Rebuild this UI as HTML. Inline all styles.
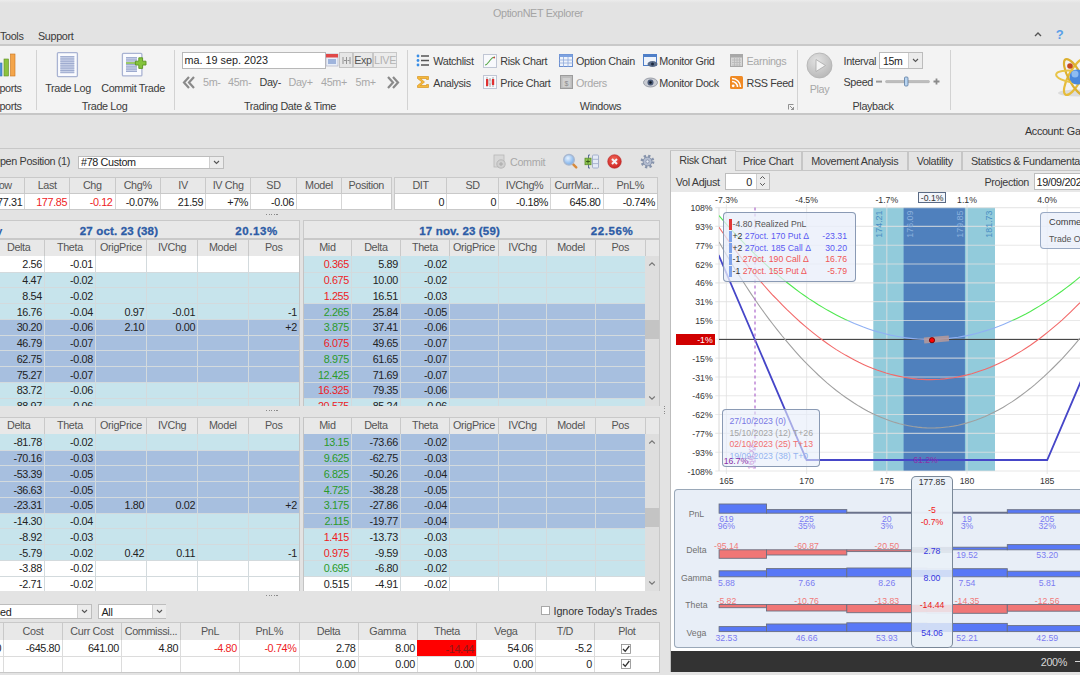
<!DOCTYPE html><html><head><meta charset="utf-8"><style>
html,body{margin:0;padding:0;}
body{width:1080px;height:675px;overflow:hidden;position:relative;background:#e3e3e3;font-family:"Liberation Sans",sans-serif;}
.t{position:absolute;white-space:nowrap;letter-spacing:-0.35px;}
.r{position:absolute;box-sizing:border-box;}
svg{position:absolute;}
</style></head><body>
<div class="r" style="left:0.00px;top:0.00px;width:1080.00px;height:3.00px;background:linear-gradient(#ececec,#e3e3e3);"></div><div class="t" style="top:6.00px;height:14px;line-height:14px;font-size:10.8px;color:#a4a4a4;left:438.00px;width:200px;text-align:center;">OptionNET Explorer</div><div class="t" style="top:29.00px;height:14px;line-height:14px;font-size:10.8px;color:#3a3a3a;left:0.00px;">Tools</div><div class="t" style="top:29.00px;height:14px;line-height:14px;font-size:10.8px;color:#3a3a3a;left:38.00px;">Support</div><div class="r" style="left:0.00px;top:44.00px;width:1080.00px;height:2.00px;background:#c9c9c9;"></div><div class="r" style="left:0.00px;top:46.00px;width:1080.00px;height:67.00px;background:#f3f3f3;"></div><div class="r" style="left:0.00px;top:113.00px;width:1080.00px;height:1.60px;background:#c6c6c6;"></div><div class="t" style="top:124.00px;height:14px;line-height:14px;font-size:10.8px;color:#333;left:1025.00px;">Account: Ga</div><div class="r" style="left:0.00px;top:148.00px;width:1080.00px;height:1.00px;background:#c8c8c8;"></div><div class="r" style="left:36.00px;top:50.00px;width:1.00px;height:60.00px;background:#d2d2d2;"></div><div class="r" style="left:174.00px;top:50.00px;width:1.00px;height:60.00px;background:#d2d2d2;"></div><div class="r" style="left:407.00px;top:50.00px;width:1.00px;height:60.00px;background:#d2d2d2;"></div><div class="r" style="left:797.00px;top:50.00px;width:1.00px;height:60.00px;background:#d2d2d2;"></div><div class="r" style="left:949.50px;top:50.00px;width:1.00px;height:60.00px;background:#d2d2d2;"></div><svg style="left:0;top:53px" width="16" height="24" viewBox="0 0 16 24"><rect x="-3" y="10" width="5" height="13" fill="#4f93d8" stroke="#3a73b0" stroke-width="0.6"/><rect x="4" y="6" width="4.5" height="17" fill="#8cc23f" stroke="#5e8f22" stroke-width="0.6"/><rect x="10.5" y="1" width="4.5" height="22" fill="#f4a54a" stroke="#c8741c" stroke-width="0.6"/></svg><div class="t" style="top:81.00px;height:14px;line-height:14px;font-size:10.8px;color:#3b3b3b;left:-13.70px;">Reports</div><div class="t" style="top:99.00px;height:14px;line-height:14px;font-size:10.8px;color:#3b3b3b;left:-13.70px;">Reports</div><svg style="left:56px;top:51px" width="23" height="27" viewBox="0 0 23 27"><rect x="1.4" y="1.6" width="20" height="24" rx="1" fill="#fafbfe" stroke="#a9b3d2" stroke-width="1.3"/><rect x="4.3" y="5" width="14" height="17" fill="#c6cfe6"/><rect x="4.3" y="5.2" width="14" height="0.9" fill="#9aa7cc"/><rect x="4.3" y="7.5" width="14" height="0.9" fill="#9aa7cc"/><rect x="4.3" y="9.8" width="14" height="0.9" fill="#9aa7cc"/><rect x="4.3" y="12.1" width="14" height="0.9" fill="#9aa7cc"/><rect x="4.3" y="14.4" width="14" height="0.9" fill="#9aa7cc"/><rect x="4.3" y="16.7" width="14" height="0.9" fill="#9aa7cc"/><rect x="4.3" y="19.0" width="14" height="0.9" fill="#9aa7cc"/><rect x="4.3" y="21.3" width="14" height="0.9" fill="#9aa7cc"/></svg><div class="t" style="top:81.00px;height:14px;line-height:14px;font-size:10.8px;color:#3b3b3b;left:28.00px;width:80px;text-align:center;">Trade Log</div><svg style="left:121px;top:52px" width="28" height="25" viewBox="0 0 28 25"><rect x="1.4" y="1.4" width="19.5" height="22.5" rx="1" fill="#fafbfe" stroke="#a9b3d2" stroke-width="1.3"/><rect x="5" y="5" width="11" height="15" fill="#c6cfe6"/><rect x="5" y="5.2" width="11" height="0.9" fill="#9aa7cc"/><rect x="5" y="7.5" width="11" height="0.9" fill="#9aa7cc"/><rect x="5" y="9.8" width="11" height="0.9" fill="#9aa7cc"/><rect x="5" y="12.1" width="11" height="0.9" fill="#9aa7cc"/><rect x="5" y="14.4" width="11" height="0.9" fill="#9aa7cc"/><rect x="5" y="16.7" width="11" height="0.9" fill="#9aa7cc"/><rect x="5" y="19.0" width="11" height="0.9" fill="#9aa7cc"/><rect x="5" y="10" width="10" height="2" fill="#98c868"/><path d="M14.4 9.2h3.4v-3.4h3.8v3.4h3.4v3.8h-3.4v3.4h-3.8v-3.4h-3.4z" fill="#84c43c" stroke="#5c9422" stroke-width="0.9"/></svg><div class="t" style="top:81.00px;height:14px;line-height:14px;font-size:10.8px;color:#3b3b3b;left:93.00px;width:80px;text-align:center;">Commit Trade</div><div class="t" style="top:99.00px;height:14px;line-height:14px;font-size:10.8px;color:#3b3b3b;left:64.50px;width:80px;text-align:center;">Trade Log</div><div class="r" style="left:182.00px;top:51.50px;width:144.00px;height:17.00px;background:#ffffff;box-shadow:inset 0 0 0 1px #b8b8b8;"></div><div class="t" style="top:53.00px;height:14px;line-height:14px;font-size:10.8px;color:#222;left:184.50px;letter-spacing:0;">ma. 19 sep. 2023</div><svg style="left:325px;top:53px" width="14" height="14" viewBox="0 0 14 14"><rect x="1" y="1" width="12" height="12" fill="#e8eef8" stroke="#b8b8c8" stroke-width="0.8"/><rect x="1" y="1" width="12" height="3.5" fill="#e04848"/><rect x="3" y="6" width="8" height="5" fill="#9fb4dc"/></svg><div class="r" style="left:339.00px;top:52.00px;width:14.00px;height:16.00px;background:#e6e6e6;box-shadow:inset 0 0 0 1px #c4c4c4;"></div><svg style="left:342px;top:56px" width="9" height="9" viewBox="0 0 9 9"><path d="M1 1v7M4.5 1v7M8 1v7M2 4.5h2M5.5 4.5h2" stroke="#888" stroke-width="0.9" fill="none"/></svg><div class="r" style="left:353.00px;top:52.00px;width:20.00px;height:16.00px;background:#e9e9e9;box-shadow:inset 0 0 0 1px #c8c8c8;"></div><div class="t" style="top:53.00px;height:14px;line-height:14px;font-size:10.8px;color:#555;left:353.00px;width:20px;text-align:center;">Exp</div><div class="r" style="left:373.00px;top:52.00px;width:24.00px;height:16.00px;background:#ececec;box-shadow:inset 0 0 0 1px #c8c8c8;"></div><div class="t" style="top:53.00px;height:14px;line-height:14px;font-size:10.8px;color:#b2b2b2;left:373.00px;width:24px;text-align:center;">LIVE</div><svg style="left:182px;top:76px" width="14" height="13" viewBox="0 0 14 13"><path d="M7 1L2 6.5 7 12M12 1L7 6.5 12 12" stroke="#8a8a8a" stroke-width="2.2" fill="none"/></svg><div class="t" style="top:75.00px;height:14px;line-height:14px;font-size:10.8px;color:#a8a8a8;left:203.00px;">5m-</div><div class="t" style="top:75.00px;height:14px;line-height:14px;font-size:10.8px;color:#a8a8a8;left:228.00px;">45m-</div><div class="t" style="top:75.00px;height:14px;line-height:14px;font-size:10.8px;color:#3b3b3b;left:259.50px;">Day-</div><div class="t" style="top:75.00px;height:14px;line-height:14px;font-size:10.8px;color:#a8a8a8;left:288.50px;">Day+</div><div class="t" style="top:75.00px;height:14px;line-height:14px;font-size:10.8px;color:#a8a8a8;left:321.00px;">45m+</div><div class="t" style="top:75.00px;height:14px;line-height:14px;font-size:10.8px;color:#a8a8a8;left:355.50px;">5m+</div><svg style="left:386px;top:76px" width="14" height="13" viewBox="0 0 14 13"><path d="M2 1L7 6.5 2 12M7 1L12 6.5 7 12" stroke="#8a8a8a" stroke-width="2.2" fill="none"/></svg><div class="t" style="top:99.00px;height:14px;line-height:14px;font-size:10.8px;color:#3b3b3b;left:230.00px;width:120px;text-align:center;">Trading Date &amp; Time</div><svg style="left:416px;top:54px" width="14" height="13" viewBox="0 0 14 13"><circle cx="2" cy="2" r="1.4" fill="#3a8ee6"/><circle cx="2" cy="6.5" r="1.4" fill="#3a8ee6"/><circle cx="2" cy="11" r="1.4" fill="#3a8ee6"/><path d="M5 2h8M5 6.5h8M5 11h8" stroke="#555" stroke-width="1.6"/></svg><div class="t" style="top:54.00px;height:14px;line-height:14px;font-size:10.8px;color:#3b3b3b;left:433.30px;">Watchlist</div><svg style="left:416px;top:75px" width="14" height="14" viewBox="0 0 14 14"><path d="M1.5 1.5h11v3h-2v-1h-6l4 3.5-4 3.5h6v-1h2v3h-11v-2l4.5-3.5-4.5-3.5z" fill="#f6b93b" stroke="#d08a10" stroke-width="0.6"/></svg><div class="t" style="top:75.70px;height:14px;line-height:14px;font-size:10.8px;color:#3b3b3b;left:433.30px;">Analysis</div><svg style="left:483px;top:54px" width="14" height="14" viewBox="0 0 14 14"><rect x="0.5" y="0.5" width="13" height="13" fill="#f8f9fc" stroke="#c0c6d4" stroke-width="1"/><path d="M2 11C4 11 5 9 6.5 7S9 3 12 3" stroke="#58a848" stroke-width="1.1" fill="none"/><circle cx="11.2" cy="3.6" r="0.9" fill="#d04040"/></svg><div class="t" style="top:54.00px;height:14px;line-height:14px;font-size:10.8px;color:#3b3b3b;left:500.30px;">Risk Chart</div><svg style="left:483px;top:75px" width="14" height="14" viewBox="0 0 14 14"><rect x="0.5" y="0.5" width="13" height="13" fill="#f8f9fc" stroke="#c0c6d4" stroke-width="1"/><path d="M4 2v10M7 3v9M10 2v10" stroke="#909090" stroke-width="0.8"/><rect x="3" y="4" width="2.2" height="7" fill="#e03030"/><rect x="6" y="5" width="2" height="4" fill="#f4f4f4" stroke="#888" stroke-width="0.5"/><rect x="9" y="4" width="2.2" height="6" fill="#e03030"/></svg><div class="t" style="top:75.70px;height:14px;line-height:14px;font-size:10.8px;color:#3b3b3b;left:500.30px;">Price Chart</div><svg style="left:559px;top:54px" width="14" height="13" viewBox="0 0 14 13"><rect x="0.5" y="0.5" width="13" height="12" fill="#eef3fb" stroke="#6b8fd0" stroke-width="1"/><rect x="0.5" y="0.5" width="13" height="2.5" fill="#7da2e0"/><path d="M4.5 3v10M9 3v10M0 6h14M0 9h14" stroke="#8fa9dc" stroke-width="0.8"/></svg><div class="t" style="top:54.00px;height:14px;line-height:14px;font-size:10.8px;color:#3b3b3b;left:576.00px;">Option Chain</div><svg style="left:560px;top:75px" width="13" height="14" viewBox="0 0 13 14"><rect x="0.5" y="0.5" width="12" height="13" fill="#bdbdbd" stroke="#9c9c9c" stroke-width="1"/><rect x="2.5" y="3" width="8" height="9" fill="#d0d0d0"/><text x="6.5" y="11" font-size="7" text-anchor="middle" fill="#8a8a8a" font-family="Liberation Sans">$</text></svg><div class="t" style="top:75.70px;height:14px;line-height:14px;font-size:10.8px;color:#a8a8a8;left:576.00px;">Orders</div><svg style="left:643px;top:54px" width="15" height="14" viewBox="0 0 15 14"><rect x="0.5" y="0.5" width="13" height="11" fill="#eef3fb" stroke="#4f7fc8" stroke-width="1"/><rect x="0.5" y="0.5" width="13" height="2.5" fill="#4f7fc8"/><ellipse cx="9.5" cy="10" rx="5" ry="3" fill="#5a6d8a"/><circle cx="9.5" cy="10" r="1.5" fill="#1d2a40"/></svg><div class="t" style="top:54.00px;height:14px;line-height:14px;font-size:10.8px;color:#3b3b3b;left:659.30px;">Monitor Grid</div><svg style="left:643px;top:77px" width="15" height="11" viewBox="0 0 15 11"><ellipse cx="7.5" cy="5.5" rx="7" ry="4.5" fill="#c8cbd2" stroke="#8a8f9a" stroke-width="0.8"/><circle cx="7.5" cy="5.5" r="3" fill="#4a5a78"/><circle cx="7.5" cy="5.5" r="1.2" fill="#101820"/></svg><div class="t" style="top:75.70px;height:14px;line-height:14px;font-size:10.8px;color:#3b3b3b;left:659.30px;">Monitor Dock</div><svg style="left:730px;top:54px" width="13" height="13" viewBox="0 0 13 13"><rect x="0.5" y="0.5" width="12" height="12" fill="#d6d6d6" stroke="#a8a8a8" stroke-width="1"/><rect x="0.5" y="0.5" width="12" height="3" fill="#a8a8a8"/><path d="M2 6h9M2 8.5h9M2 11h9M4.5 4v8M7 4v8M9.5 4v8" stroke="#b8b8b8" stroke-width="0.8"/></svg><div class="t" style="top:54.00px;height:14px;line-height:14px;font-size:10.8px;color:#a8a8a8;left:746.50px;">Earnings</div><svg style="left:730px;top:76px" width="13" height="13" viewBox="0 0 13 13"><rect x="0" y="0" width="13" height="13" rx="1.5" fill="#f08a24"/><circle cx="3.2" cy="9.8" r="1.4" fill="#fff"/><path d="M2 5.5a5.5 5.5 0 0 1 5.5 5.5M2 2.5a8.5 8.5 0 0 1 8.5 8.5" stroke="#fff" stroke-width="1.5" fill="none"/></svg><div class="t" style="top:75.70px;height:14px;line-height:14px;font-size:10.8px;color:#3b3b3b;left:746.50px;">RSS Feed</div><div class="t" style="top:99.30px;height:14px;line-height:14px;font-size:10.8px;color:#3b3b3b;left:560.50px;width:80px;text-align:center;">Windows</div><svg style="left:788px;top:104px" width="6" height="6" viewBox="0 0 6 6"><path d="M0.5 5.5V0.5h5M2 2l3.5 3.5M5.5 3v2.5H3" stroke="#777" stroke-width="0.8" fill="none"/></svg><svg style="left:806px;top:52px" width="27" height="27" viewBox="0 0 27 27"><defs><radialGradient id="pg" cx="0.4" cy="0.3" r="0.8"><stop offset="0" stop-color="#e2e2e2"/><stop offset="1" stop-color="#b4b4b4"/></radialGradient></defs><circle cx="13.5" cy="13.5" r="12.5" fill="url(#pg)" stroke="#b0b0b0" stroke-width="0.8"/><path d="M10 7.5v12l9.5-6z" fill="#f4f4f4" stroke="#a8a8a8" stroke-width="0.8"/></svg><div class="t" style="top:81.50px;height:14px;line-height:14px;font-size:10.8px;color:#a8a8a8;left:799.50px;width:40px;text-align:center;">Play</div><div class="t" style="top:53.50px;height:14px;line-height:14px;font-size:10.8px;color:#3b3b3b;left:843.50px;">Interval</div><div class="r" style="left:879.00px;top:52.00px;width:44.00px;height:17.00px;background:#ffffff;box-shadow:inset 0 0 0 1px #bcbcbc;"></div><div class="t" style="top:53.50px;height:14px;line-height:14px;font-size:10.5px;color:#222;left:883.00px;">15m</div><div class="r" style="left:908.00px;top:53.00px;width:14.00px;height:15.00px;background:#ececec;"></div><div class="r" style="left:908.00px;top:53.00px;width:1.00px;height:15.00px;background:#cfcfcf;"></div><svg style="left:912px;top:58px" width="7" height="5" viewBox="0 0 7 5"><path d="M1 1l2.5 2.5L6 1" stroke="#555" stroke-width="1.1" fill="none"/></svg><div class="t" style="top:74.50px;height:14px;line-height:14px;font-size:10.8px;color:#3b3b3b;left:843.50px;">Speed</div><svg style="left:874px;top:76px" width="68" height="11" viewBox="0 0 68 11"><rect x="2" y="4.6" width="6" height="2" fill="#9a9a9a"/><rect x="11.5" y="4.5" width="44" height="2.2" rx="1" fill="#bdbdbd" stroke="#9a9a9a" stroke-width="0.4"/><rect x="30.5" y="1" width="3.5" height="9" rx="1" fill="#b8d4f0" stroke="#5a7aa0" stroke-width="0.8"/><path d="M62.5 2.5v6M59.5 5.5h6" stroke="#8a8a8a" stroke-width="1.8"/></svg><div class="t" style="top:99.30px;height:14px;line-height:14px;font-size:10.8px;color:#3b3b3b;left:833.00px;width:80px;text-align:center;">Playback</div><svg style="left:1040px;top:50px" width="40" height="52" viewBox="1040 50 40 52"><ellipse cx="1078" cy="93" rx="20" ry="3.5" fill="#d6d6d6" opacity="0.8"/><ellipse cx="1075" cy="77" rx="20" ry="6.5" transform="rotate(-62 1075 77)" fill="none" stroke="#e6bc3a" stroke-width="2.2"/><ellipse cx="1075" cy="77" rx="20" ry="6.5" transform="rotate(62 1075 77)" fill="none" stroke="#dcb030" stroke-width="2.2"/><ellipse cx="1075" cy="77" rx="19" ry="6" transform="rotate(8 1075 77)" fill="none" stroke="#e8c448" stroke-width="2"/><circle cx="1077" cy="77" r="7.5" fill="#4a88dc"/><circle cx="1075" cy="74" r="3.5" fill="#a6cdf8" opacity="0.75"/><circle cx="1070" cy="66" r="2.8" fill="#c4461e"/></svg><svg style="left:1034px;top:31px" width="8" height="6" viewBox="0 0 8 6"><path d="M1 5L4 2l3 3" stroke="#555" stroke-width="1.4" fill="none"/></svg><div class="t" style="top:28.00px;height:14px;line-height:14px;font-size:13px;color:#5aa0e8;font-weight:bold;left:1052.50px;width:14px;text-align:center;">?</div><div class="t" style="top:154.40px;height:14px;line-height:14px;font-size:10.8px;color:#3a3a3a;right:1010.00px;">Open Position (1)</div><div class="r" style="left:78.00px;top:155.50px;width:146.00px;height:13.50px;background:#ffffff;box-shadow:inset 0 0 0 1px #bdbdbd;"></div><div class="t" style="top:155.00px;height:14px;line-height:14px;font-size:10.8px;color:#222;left:81.00px;">#78 Custom</div><div class="r" style="left:209.00px;top:156.50px;width:14.00px;height:11.50px;background:#ececec;"></div><div class="r" style="left:209.00px;top:156.50px;width:1.00px;height:11.50px;background:#cfcfcf;"></div><svg style="left:213px;top:160px" width="7" height="5" viewBox="0 0 7 5"><path d="M1 1l2.5 2.5L6 1" stroke="#555" stroke-width="1.1" fill="none"/></svg><svg style="left:493px;top:154px" width="14" height="15" viewBox="0 0 14 15"><rect x="1" y="1" width="10" height="12" fill="#d8d8d8" stroke="#b8b8b8" stroke-width="0.8"/><circle cx="8" cy="10" r="4.2" fill="#d0d0d0" stroke="#b0b0b0" stroke-width="0.8"/><path d="M8 8v4M6 10h4" stroke="#aaa" stroke-width="1"/></svg><div class="t" style="top:154.50px;height:14px;line-height:14px;font-size:10.8px;color:#a8a8a8;left:510.00px;">Commit</div><svg style="left:562px;top:153px" width="16" height="16" viewBox="0 0 16 16"><defs><radialGradient id="mg" cx="0.4" cy="0.35" r="0.7"><stop offset="0" stop-color="#e6f2ff"/><stop offset="1" stop-color="#6fa8e8"/></radialGradient></defs><path d="M10 10.2l4.2 4.2" stroke="#d88a3a" stroke-width="2.4" stroke-linecap="round"/><circle cx="7" cy="6.8" r="5.3" fill="url(#mg)" stroke="#a9b8d0" stroke-width="1.4"/></svg><svg style="left:584px;top:154px" width="16" height="15" viewBox="0 0 16 15"><path d="M6 1H4.5v13H6" stroke="#5a6c98" stroke-width="1" fill="none"/><rect x="8.5" y="1" width="6" height="13" rx="1" fill="#e4eaf6" stroke="#a4b0cc" stroke-width="1"/><path d="M9 5.3h5M9 9.6h5" stroke="#a4b0cc" stroke-width="0.9"/><rect x="1" y="4.2" width="6" height="6.5" fill="#8cc450" stroke="#5a8e2a" stroke-width="0.8"/><path d="M4 5.5v4M2 7.5h4" stroke="#2d4a10" stroke-width="0.8"/></svg><svg style="left:607px;top:154px" width="15" height="15" viewBox="0 0 15 15"><defs><radialGradient id="rx" cx="0.45" cy="0.35" r="0.7"><stop offset="0" stop-color="#f46a5a"/><stop offset="1" stop-color="#c81e1e"/></radialGradient></defs><circle cx="7.5" cy="7.5" r="6.8" fill="url(#rx)" stroke="#b82a2a" stroke-width="0.6"/><path d="M5 5l5 5M10 5l-5 5" stroke="#f2f4f8" stroke-width="2"/></svg><svg style="left:640px;top:154px" width="15" height="15" viewBox="0 0 15 15"><circle cx="7.5" cy="7.5" r="5.6" fill="none" stroke="#8693ab" stroke-width="2.6" stroke-dasharray="2.2 2.2"/><circle cx="7.5" cy="7.5" r="4.4" fill="#b4bdd0" stroke="#7d8aa4" stroke-width="0.9"/><circle cx="7.5" cy="7.5" r="1.6" fill="#e8ecf4" stroke="#7d8aa4" stroke-width="0.7"/></svg><div class="r" style="left:-20.00px;top:176.60px;width:44.80px;height:17.00px;background:#e8e8e8;"></div><div class="r" style="left:24.80px;top:176.60px;width:44.80px;height:17.00px;background:#e8e8e8;"></div><div class="r" style="left:69.60px;top:176.60px;width:45.40px;height:17.00px;background:#e8e8e8;"></div><div class="r" style="left:115.00px;top:176.60px;width:45.40px;height:17.00px;background:#e8e8e8;"></div><div class="r" style="left:160.40px;top:176.60px;width:45.20px;height:17.00px;background:#e8e8e8;"></div><div class="r" style="left:205.60px;top:176.60px;width:45.00px;height:17.00px;background:#e8e8e8;"></div><div class="r" style="left:250.60px;top:176.60px;width:45.80px;height:17.00px;background:#e8e8e8;"></div><div class="r" style="left:296.40px;top:176.60px;width:45.00px;height:17.00px;background:#e8e8e8;"></div><div class="r" style="left:341.40px;top:176.60px;width:49.60px;height:17.00px;background:#e8e8e8;"></div><div class="t" style="top:178.10px;height:14px;line-height:14px;font-size:10.8px;color:#555555;left:-57.60px;width:120px;text-align:center;">Low</div><div class="t" style="top:178.10px;height:14px;line-height:14px;font-size:10.8px;color:#555555;left:-12.80px;width:120px;text-align:center;">Last</div><div class="t" style="top:178.10px;height:14px;line-height:14px;font-size:10.8px;color:#555555;left:32.30px;width:120px;text-align:center;">Chg</div><div class="t" style="top:178.10px;height:14px;line-height:14px;font-size:10.8px;color:#555555;left:77.70px;width:120px;text-align:center;">Chg%</div><div class="t" style="top:178.10px;height:14px;line-height:14px;font-size:10.8px;color:#555555;left:123.00px;width:120px;text-align:center;">IV</div><div class="t" style="top:178.10px;height:14px;line-height:14px;font-size:10.8px;color:#555555;left:168.10px;width:120px;text-align:center;">IV Chg</div><div class="t" style="top:178.10px;height:14px;line-height:14px;font-size:10.8px;color:#555555;left:213.50px;width:120px;text-align:center;">SD</div><div class="t" style="top:178.10px;height:14px;line-height:14px;font-size:10.8px;color:#555555;left:258.90px;width:120px;text-align:center;">Model</div><div class="t" style="top:178.10px;height:14px;line-height:14px;font-size:10.8px;color:#555555;left:306.20px;width:120px;text-align:center;">Position</div><div class="r" style="left:-20.00px;top:193.60px;width:44.80px;height:15.80px;background:#ffffff;"></div><div class="r" style="left:24.80px;top:193.60px;width:44.80px;height:15.80px;background:#ffffff;"></div><div class="r" style="left:69.60px;top:193.60px;width:45.40px;height:15.80px;background:#ffffff;"></div><div class="r" style="left:115.00px;top:193.60px;width:45.40px;height:15.80px;background:#ffffff;"></div><div class="r" style="left:160.40px;top:193.60px;width:45.20px;height:15.80px;background:#ffffff;"></div><div class="r" style="left:205.60px;top:193.60px;width:45.00px;height:15.80px;background:#ffffff;"></div><div class="r" style="left:250.60px;top:193.60px;width:45.80px;height:15.80px;background:#ffffff;"></div><div class="r" style="left:296.40px;top:193.60px;width:45.00px;height:15.80px;background:#ffffff;"></div><div class="r" style="left:341.40px;top:193.60px;width:49.60px;height:15.80px;background:#ffffff;"></div><div class="t" style="top:194.50px;height:14px;line-height:14px;font-size:10.8px;color:#222222;right:1057.70px;">177.31</div><div class="t" style="top:194.50px;height:14px;line-height:14px;font-size:10.8px;color:#ee1c24;right:1012.90px;">177.85</div><div class="t" style="top:194.50px;height:14px;line-height:14px;font-size:10.8px;color:#ee1c24;right:967.50px;">-0.12</div><div class="t" style="top:194.50px;height:14px;line-height:14px;font-size:10.8px;color:#222222;right:922.10px;">-0.07%</div><div class="t" style="top:194.50px;height:14px;line-height:14px;font-size:10.8px;color:#222222;right:876.90px;">21.59</div><div class="t" style="top:194.50px;height:14px;line-height:14px;font-size:10.8px;color:#222222;right:831.90px;">+7%</div><div class="t" style="top:194.50px;height:14px;line-height:14px;font-size:10.8px;color:#222222;right:786.10px;">-0.06</div><div class="r" style="left:24.30px;top:176.60px;width:1.00px;height:17.00px;background:#c9c9c9;"></div><div class="r" style="left:69.10px;top:176.60px;width:1.00px;height:17.00px;background:#c9c9c9;"></div><div class="r" style="left:114.50px;top:176.60px;width:1.00px;height:17.00px;background:#c9c9c9;"></div><div class="r" style="left:159.90px;top:176.60px;width:1.00px;height:17.00px;background:#c9c9c9;"></div><div class="r" style="left:205.10px;top:176.60px;width:1.00px;height:17.00px;background:#c9c9c9;"></div><div class="r" style="left:250.10px;top:176.60px;width:1.00px;height:17.00px;background:#c9c9c9;"></div><div class="r" style="left:295.90px;top:176.60px;width:1.00px;height:17.00px;background:#c9c9c9;"></div><div class="r" style="left:340.90px;top:176.60px;width:1.00px;height:17.00px;background:#c9c9c9;"></div><div class="r" style="left:-20.00px;top:176.60px;width:411.00px;height:1.00px;background:#c9c9c9;"></div><div class="r" style="left:-20.00px;top:193.10px;width:411.00px;height:1.00px;background:#c9c9c9;"></div><div class="r" style="left:24.30px;top:193.60px;width:1.00px;height:15.80px;background:#d6d6d6;"></div><div class="r" style="left:69.10px;top:193.60px;width:1.00px;height:15.80px;background:#d6d6d6;"></div><div class="r" style="left:114.50px;top:193.60px;width:1.00px;height:15.80px;background:#d6d6d6;"></div><div class="r" style="left:159.90px;top:193.60px;width:1.00px;height:15.80px;background:#d6d6d6;"></div><div class="r" style="left:205.10px;top:193.60px;width:1.00px;height:15.80px;background:#d6d6d6;"></div><div class="r" style="left:250.10px;top:193.60px;width:1.00px;height:15.80px;background:#d6d6d6;"></div><div class="r" style="left:295.90px;top:193.60px;width:1.00px;height:15.80px;background:#d6d6d6;"></div><div class="r" style="left:340.90px;top:193.60px;width:1.00px;height:15.80px;background:#d6d6d6;"></div><div class="r" style="left:-20.00px;top:208.90px;width:411.00px;height:1.00px;background:#c9c9c9;"></div><div class="r" style="left:390.50px;top:176.60px;width:1.00px;height:33.30px;background:#c9c9c9;"></div><div class="r" style="left:394.60px;top:176.60px;width:52.00px;height:17.00px;background:#e8e8e8;"></div><div class="r" style="left:446.60px;top:176.60px;width:52.00px;height:17.00px;background:#e8e8e8;"></div><div class="r" style="left:498.60px;top:176.60px;width:52.00px;height:17.00px;background:#e8e8e8;"></div><div class="r" style="left:550.60px;top:176.60px;width:52.40px;height:17.00px;background:#e8e8e8;"></div><div class="r" style="left:603.00px;top:176.60px;width:54.40px;height:17.00px;background:#e8e8e8;"></div><div class="t" style="top:178.10px;height:14px;line-height:14px;font-size:10.8px;color:#555555;left:360.60px;width:120px;text-align:center;">DIT</div><div class="t" style="top:178.10px;height:14px;line-height:14px;font-size:10.8px;color:#555555;left:412.60px;width:120px;text-align:center;">SD</div><div class="t" style="top:178.10px;height:14px;line-height:14px;font-size:10.8px;color:#555555;left:464.60px;width:120px;text-align:center;">IVChg%</div><div class="t" style="top:178.10px;height:14px;line-height:14px;font-size:10.8px;color:#555555;left:516.80px;width:120px;text-align:center;">CurrMar...</div><div class="t" style="top:178.10px;height:14px;line-height:14px;font-size:10.8px;color:#555555;left:570.20px;width:120px;text-align:center;">PnL%</div><div class="r" style="left:394.60px;top:193.60px;width:52.00px;height:15.80px;background:#ffffff;"></div><div class="r" style="left:446.60px;top:193.60px;width:52.00px;height:15.80px;background:#ffffff;"></div><div class="r" style="left:498.60px;top:193.60px;width:52.00px;height:15.80px;background:#ffffff;"></div><div class="r" style="left:550.60px;top:193.60px;width:52.40px;height:15.80px;background:#ffffff;"></div><div class="r" style="left:603.00px;top:193.60px;width:54.40px;height:15.80px;background:#ffffff;"></div><div class="t" style="top:194.50px;height:14px;line-height:14px;font-size:10.8px;color:#222222;right:635.90px;">0</div><div class="t" style="top:194.50px;height:14px;line-height:14px;font-size:10.8px;color:#222222;right:583.90px;">0</div><div class="t" style="top:194.50px;height:14px;line-height:14px;font-size:10.8px;color:#222222;right:531.90px;">-0.18%</div><div class="t" style="top:194.50px;height:14px;line-height:14px;font-size:10.8px;color:#222222;right:479.50px;">645.80</div><div class="t" style="top:194.50px;height:14px;line-height:14px;font-size:10.8px;color:#222222;right:425.10px;">-0.74%</div><div class="r" style="left:446.10px;top:176.60px;width:1.00px;height:17.00px;background:#c9c9c9;"></div><div class="r" style="left:498.10px;top:176.60px;width:1.00px;height:17.00px;background:#c9c9c9;"></div><div class="r" style="left:550.10px;top:176.60px;width:1.00px;height:17.00px;background:#c9c9c9;"></div><div class="r" style="left:602.50px;top:176.60px;width:1.00px;height:17.00px;background:#c9c9c9;"></div><div class="r" style="left:394.60px;top:176.60px;width:262.80px;height:1.00px;background:#c9c9c9;"></div><div class="r" style="left:394.60px;top:193.10px;width:262.80px;height:1.00px;background:#c9c9c9;"></div><div class="r" style="left:446.10px;top:193.60px;width:1.00px;height:15.80px;background:#d6d6d6;"></div><div class="r" style="left:498.10px;top:193.60px;width:1.00px;height:15.80px;background:#d6d6d6;"></div><div class="r" style="left:550.10px;top:193.60px;width:1.00px;height:15.80px;background:#d6d6d6;"></div><div class="r" style="left:602.50px;top:193.60px;width:1.00px;height:15.80px;background:#d6d6d6;"></div><div class="r" style="left:394.60px;top:208.90px;width:262.80px;height:1.00px;background:#c9c9c9;"></div><div class="r" style="left:394.10px;top:176.60px;width:1.00px;height:33.30px;background:#c9c9c9;"></div><div class="r" style="left:656.90px;top:176.60px;width:1.00px;height:33.30px;background:#c9c9c9;"></div><div class="r" style="left:266.00px;top:214.10px;width:1.30px;height:1.20px;background:#8a8a8a;"></div><div class="r" style="left:268.60px;top:214.10px;width:1.30px;height:1.20px;background:#8a8a8a;"></div><div class="r" style="left:271.20px;top:214.10px;width:1.30px;height:1.20px;background:#8a8a8a;"></div><div class="r" style="left:273.80px;top:214.10px;width:1.30px;height:1.20px;background:#8a8a8a;"></div><div class="r" style="left:276.40px;top:214.10px;width:1.30px;height:1.20px;background:#8a8a8a;"></div><div class="r" style="left:-20.00px;top:220.20px;width:319.90px;height:18.40px;background:#e8e8e8;box-shadow:inset 0 0 0 1px #c9c9c9;"></div><div class="r" style="left:303.40px;top:220.20px;width:356.50px;height:18.40px;background:#e8e8e8;box-shadow:inset 0 0 0 1px #c9c9c9;"></div><div class="t" style="top:223.60px;height:14px;line-height:14px;font-size:11.5px;color:#2d5ca6;font-weight:bold;left:59.00px;width:120px;text-align:center;letter-spacing:0.15px;-webkit-text-stroke:0.3px #2d5ca6;">27 oct. 23 (38)</div><div class="t" style="top:223.60px;height:14px;line-height:14px;font-size:11.5px;color:#2d5ca6;font-weight:bold;left:216.50px;width:80px;text-align:center;letter-spacing:0.6px;-webkit-text-stroke:0.3px #2d5ca6;">20.13%</div><div class="t" style="top:223.60px;height:14px;line-height:14px;font-size:11.5px;color:#2d5ca6;font-weight:bold;right:1078.00px;">y</div><div class="t" style="top:223.60px;height:14px;line-height:14px;font-size:11.5px;color:#2d5ca6;font-weight:bold;left:399.60px;width:120px;text-align:center;letter-spacing:0.15px;-webkit-text-stroke:0.3px #2d5ca6;">17 nov. 23 (59)</div><div class="t" style="top:223.60px;height:14px;line-height:14px;font-size:11.5px;color:#2d5ca6;font-weight:bold;left:572.00px;width:80px;text-align:center;letter-spacing:0.6px;-webkit-text-stroke:0.3px #2d5ca6;">22.56%</div><div class="r" style="left:-7.00px;top:238.60px;width:51.40px;height:17.80px;background:#e8e8e8;"></div><div class="r" style="left:44.40px;top:238.60px;width:51.00px;height:17.80px;background:#e8e8e8;"></div><div class="r" style="left:95.40px;top:238.60px;width:51.20px;height:17.80px;background:#e8e8e8;"></div><div class="r" style="left:146.60px;top:238.60px;width:51.00px;height:17.80px;background:#e8e8e8;"></div><div class="r" style="left:197.60px;top:238.60px;width:50.40px;height:17.80px;background:#e8e8e8;"></div><div class="r" style="left:248.00px;top:238.60px;width:51.40px;height:17.80px;background:#e8e8e8;"></div><div class="t" style="top:239.60px;height:14px;line-height:14px;font-size:10.8px;color:#555555;left:-41.30px;width:120px;text-align:center;">Delta</div><div class="t" style="top:239.60px;height:14px;line-height:14px;font-size:10.8px;color:#555555;left:9.90px;width:120px;text-align:center;">Theta</div><div class="t" style="top:239.60px;height:14px;line-height:14px;font-size:10.8px;color:#555555;left:61.00px;width:120px;text-align:center;">OrigPrice</div><div class="t" style="top:239.60px;height:14px;line-height:14px;font-size:10.8px;color:#555555;left:112.10px;width:120px;text-align:center;">IVChg</div><div class="t" style="top:239.60px;height:14px;line-height:14px;font-size:10.8px;color:#555555;left:162.80px;width:120px;text-align:center;">Model</div><div class="t" style="top:239.60px;height:14px;line-height:14px;font-size:10.8px;color:#555555;left:213.70px;width:120px;text-align:center;">Pos</div><div class="r" style="left:43.90px;top:238.60px;width:1.00px;height:17.80px;background:#c9c9c9;"></div><div class="r" style="left:94.90px;top:238.60px;width:1.00px;height:17.80px;background:#c9c9c9;"></div><div class="r" style="left:146.10px;top:238.60px;width:1.00px;height:17.80px;background:#c9c9c9;"></div><div class="r" style="left:197.10px;top:238.60px;width:1.00px;height:17.80px;background:#c9c9c9;"></div><div class="r" style="left:247.50px;top:238.60px;width:1.00px;height:17.80px;background:#c9c9c9;"></div><div class="r" style="left:-7.00px;top:255.90px;width:306.40px;height:1.00px;background:#c9c9c9;"></div><div class="r" style="left:303.40px;top:238.60px;width:48.00px;height:17.80px;background:#e8e8e8;"></div><div class="r" style="left:351.40px;top:238.60px;width:49.00px;height:17.80px;background:#e8e8e8;"></div><div class="r" style="left:400.40px;top:238.60px;width:49.00px;height:17.80px;background:#e8e8e8;"></div><div class="r" style="left:449.40px;top:238.60px;width:49.00px;height:17.80px;background:#e8e8e8;"></div><div class="r" style="left:498.40px;top:238.60px;width:48.20px;height:17.80px;background:#e8e8e8;"></div><div class="r" style="left:546.60px;top:238.60px;width:48.90px;height:17.80px;background:#e8e8e8;"></div><div class="r" style="left:595.50px;top:238.60px;width:49.50px;height:17.80px;background:#e8e8e8;"></div><div class="r" style="left:645.00px;top:238.60px;width:14.40px;height:17.80px;background:#e8e8e8;"></div><div class="t" style="top:239.60px;height:14px;line-height:14px;font-size:10.8px;color:#555555;left:267.40px;width:120px;text-align:center;">Mid</div><div class="t" style="top:239.60px;height:14px;line-height:14px;font-size:10.8px;color:#555555;left:315.90px;width:120px;text-align:center;">Delta</div><div class="t" style="top:239.60px;height:14px;line-height:14px;font-size:10.8px;color:#555555;left:364.90px;width:120px;text-align:center;">Theta</div><div class="t" style="top:239.60px;height:14px;line-height:14px;font-size:10.8px;color:#555555;left:413.90px;width:120px;text-align:center;">OrigPrice</div><div class="t" style="top:239.60px;height:14px;line-height:14px;font-size:10.8px;color:#555555;left:462.50px;width:120px;text-align:center;">IVChg</div><div class="t" style="top:239.60px;height:14px;line-height:14px;font-size:10.8px;color:#555555;left:511.05px;width:120px;text-align:center;">Model</div><div class="t" style="top:239.60px;height:14px;line-height:14px;font-size:10.8px;color:#555555;left:560.25px;width:120px;text-align:center;">Pos</div><div class="r" style="left:350.90px;top:238.60px;width:1.00px;height:17.80px;background:#c9c9c9;"></div><div class="r" style="left:399.90px;top:238.60px;width:1.00px;height:17.80px;background:#c9c9c9;"></div><div class="r" style="left:448.90px;top:238.60px;width:1.00px;height:17.80px;background:#c9c9c9;"></div><div class="r" style="left:497.90px;top:238.60px;width:1.00px;height:17.80px;background:#c9c9c9;"></div><div class="r" style="left:546.10px;top:238.60px;width:1.00px;height:17.80px;background:#c9c9c9;"></div><div class="r" style="left:595.00px;top:238.60px;width:1.00px;height:17.80px;background:#c9c9c9;"></div><div class="r" style="left:644.50px;top:238.60px;width:1.00px;height:17.80px;background:#c9c9c9;"></div><div class="r" style="left:303.40px;top:255.90px;width:356.00px;height:1.00px;background:#c9c9c9;"></div><div class="r" style="left:-20.00px;top:238.60px;width:319.90px;height:1.00px;background:#c9c9c9;"></div><div class="r" style="left:303.40px;top:238.60px;width:356.50px;height:1.00px;background:#c9c9c9;"></div><div class="r" style="left:-7.00px;top:256.40px;width:51.40px;height:15.75px;background:#ffffff;"></div><div class="r" style="left:44.40px;top:256.40px;width:51.00px;height:15.75px;background:#ffffff;"></div><div class="r" style="left:95.40px;top:256.40px;width:51.20px;height:15.75px;background:#ffffff;"></div><div class="r" style="left:146.60px;top:256.40px;width:51.00px;height:15.75px;background:#ffffff;"></div><div class="r" style="left:197.60px;top:256.40px;width:50.40px;height:15.75px;background:#ffffff;"></div><div class="r" style="left:248.00px;top:256.40px;width:51.40px;height:15.75px;background:#ffffff;"></div><div class="r" style="left:-7.00px;top:272.15px;width:51.40px;height:15.75px;background:#c7e4ec;"></div><div class="r" style="left:44.40px;top:272.15px;width:51.00px;height:15.75px;background:#c7e4ec;"></div><div class="r" style="left:95.40px;top:272.15px;width:51.20px;height:15.75px;background:#c7e4ec;"></div><div class="r" style="left:146.60px;top:272.15px;width:51.00px;height:15.75px;background:#c7e4ec;"></div><div class="r" style="left:197.60px;top:272.15px;width:50.40px;height:15.75px;background:#c7e4ec;"></div><div class="r" style="left:248.00px;top:272.15px;width:51.40px;height:15.75px;background:#c7e4ec;"></div><div class="r" style="left:-7.00px;top:287.90px;width:51.40px;height:15.75px;background:#c7e4ec;"></div><div class="r" style="left:44.40px;top:287.90px;width:51.00px;height:15.75px;background:#c7e4ec;"></div><div class="r" style="left:95.40px;top:287.90px;width:51.20px;height:15.75px;background:#c7e4ec;"></div><div class="r" style="left:146.60px;top:287.90px;width:51.00px;height:15.75px;background:#c7e4ec;"></div><div class="r" style="left:197.60px;top:287.90px;width:50.40px;height:15.75px;background:#c7e4ec;"></div><div class="r" style="left:248.00px;top:287.90px;width:51.40px;height:15.75px;background:#c7e4ec;"></div><div class="r" style="left:-7.00px;top:303.65px;width:51.40px;height:15.75px;background:#c7e4ec;"></div><div class="r" style="left:44.40px;top:303.65px;width:51.00px;height:15.75px;background:#c7e4ec;"></div><div class="r" style="left:95.40px;top:303.65px;width:51.20px;height:15.75px;background:#c7e4ec;"></div><div class="r" style="left:146.60px;top:303.65px;width:51.00px;height:15.75px;background:#c7e4ec;"></div><div class="r" style="left:197.60px;top:303.65px;width:50.40px;height:15.75px;background:#c7e4ec;"></div><div class="r" style="left:248.00px;top:303.65px;width:51.40px;height:15.75px;background:#c7e4ec;"></div><div class="r" style="left:-7.00px;top:319.40px;width:51.40px;height:15.75px;background:#a7bfdf;"></div><div class="r" style="left:44.40px;top:319.40px;width:51.00px;height:15.75px;background:#a7bfdf;"></div><div class="r" style="left:95.40px;top:319.40px;width:51.20px;height:15.75px;background:#a7bfdf;"></div><div class="r" style="left:146.60px;top:319.40px;width:51.00px;height:15.75px;background:#a7bfdf;"></div><div class="r" style="left:197.60px;top:319.40px;width:50.40px;height:15.75px;background:#a7bfdf;"></div><div class="r" style="left:248.00px;top:319.40px;width:51.40px;height:15.75px;background:#a7bfdf;"></div><div class="r" style="left:-7.00px;top:335.15px;width:51.40px;height:15.75px;background:#a7bfdf;"></div><div class="r" style="left:44.40px;top:335.15px;width:51.00px;height:15.75px;background:#a7bfdf;"></div><div class="r" style="left:95.40px;top:335.15px;width:51.20px;height:15.75px;background:#a7bfdf;"></div><div class="r" style="left:146.60px;top:335.15px;width:51.00px;height:15.75px;background:#a7bfdf;"></div><div class="r" style="left:197.60px;top:335.15px;width:50.40px;height:15.75px;background:#a7bfdf;"></div><div class="r" style="left:248.00px;top:335.15px;width:51.40px;height:15.75px;background:#a7bfdf;"></div><div class="r" style="left:-7.00px;top:350.90px;width:51.40px;height:15.75px;background:#a7bfdf;"></div><div class="r" style="left:44.40px;top:350.90px;width:51.00px;height:15.75px;background:#a7bfdf;"></div><div class="r" style="left:95.40px;top:350.90px;width:51.20px;height:15.75px;background:#a7bfdf;"></div><div class="r" style="left:146.60px;top:350.90px;width:51.00px;height:15.75px;background:#a7bfdf;"></div><div class="r" style="left:197.60px;top:350.90px;width:50.40px;height:15.75px;background:#a7bfdf;"></div><div class="r" style="left:248.00px;top:350.90px;width:51.40px;height:15.75px;background:#a7bfdf;"></div><div class="r" style="left:-7.00px;top:366.65px;width:51.40px;height:15.75px;background:#a7bfdf;"></div><div class="r" style="left:44.40px;top:366.65px;width:51.00px;height:15.75px;background:#a7bfdf;"></div><div class="r" style="left:95.40px;top:366.65px;width:51.20px;height:15.75px;background:#a7bfdf;"></div><div class="r" style="left:146.60px;top:366.65px;width:51.00px;height:15.75px;background:#a7bfdf;"></div><div class="r" style="left:197.60px;top:366.65px;width:50.40px;height:15.75px;background:#a7bfdf;"></div><div class="r" style="left:248.00px;top:366.65px;width:51.40px;height:15.75px;background:#a7bfdf;"></div><div class="r" style="left:-7.00px;top:382.40px;width:51.40px;height:15.75px;background:#c7e4ec;"></div><div class="r" style="left:44.40px;top:382.40px;width:51.00px;height:15.75px;background:#c7e4ec;"></div><div class="r" style="left:95.40px;top:382.40px;width:51.20px;height:15.75px;background:#c7e4ec;"></div><div class="r" style="left:146.60px;top:382.40px;width:51.00px;height:15.75px;background:#c7e4ec;"></div><div class="r" style="left:197.60px;top:382.40px;width:50.40px;height:15.75px;background:#c7e4ec;"></div><div class="r" style="left:248.00px;top:382.40px;width:51.40px;height:15.75px;background:#c7e4ec;"></div><div class="r" style="left:-7.00px;top:398.15px;width:51.40px;height:7.55px;background:#c7e4ec;"></div><div class="r" style="left:44.40px;top:398.15px;width:51.00px;height:7.55px;background:#c7e4ec;"></div><div class="r" style="left:95.40px;top:398.15px;width:51.20px;height:7.55px;background:#c7e4ec;"></div><div class="r" style="left:146.60px;top:398.15px;width:51.00px;height:7.55px;background:#c7e4ec;"></div><div class="r" style="left:197.60px;top:398.15px;width:50.40px;height:7.55px;background:#c7e4ec;"></div><div class="r" style="left:248.00px;top:398.15px;width:51.40px;height:7.55px;background:#c7e4ec;"></div><div class="r" style="left:303.40px;top:256.40px;width:48.00px;height:15.75px;background:#c7e4ec;"></div><div class="r" style="left:351.40px;top:256.40px;width:49.00px;height:15.75px;background:#c7e4ec;"></div><div class="r" style="left:400.40px;top:256.40px;width:49.00px;height:15.75px;background:#c7e4ec;"></div><div class="r" style="left:449.40px;top:256.40px;width:49.00px;height:15.75px;background:#c7e4ec;"></div><div class="r" style="left:498.40px;top:256.40px;width:48.20px;height:15.75px;background:#c7e4ec;"></div><div class="r" style="left:546.60px;top:256.40px;width:48.90px;height:15.75px;background:#c7e4ec;"></div><div class="r" style="left:595.50px;top:256.40px;width:49.50px;height:15.75px;background:#c7e4ec;"></div><div class="r" style="left:303.40px;top:272.15px;width:48.00px;height:15.75px;background:#c7e4ec;"></div><div class="r" style="left:351.40px;top:272.15px;width:49.00px;height:15.75px;background:#c7e4ec;"></div><div class="r" style="left:400.40px;top:272.15px;width:49.00px;height:15.75px;background:#c7e4ec;"></div><div class="r" style="left:449.40px;top:272.15px;width:49.00px;height:15.75px;background:#c7e4ec;"></div><div class="r" style="left:498.40px;top:272.15px;width:48.20px;height:15.75px;background:#c7e4ec;"></div><div class="r" style="left:546.60px;top:272.15px;width:48.90px;height:15.75px;background:#c7e4ec;"></div><div class="r" style="left:595.50px;top:272.15px;width:49.50px;height:15.75px;background:#c7e4ec;"></div><div class="r" style="left:303.40px;top:287.90px;width:48.00px;height:15.75px;background:#c7e4ec;"></div><div class="r" style="left:351.40px;top:287.90px;width:49.00px;height:15.75px;background:#c7e4ec;"></div><div class="r" style="left:400.40px;top:287.90px;width:49.00px;height:15.75px;background:#c7e4ec;"></div><div class="r" style="left:449.40px;top:287.90px;width:49.00px;height:15.75px;background:#c7e4ec;"></div><div class="r" style="left:498.40px;top:287.90px;width:48.20px;height:15.75px;background:#c7e4ec;"></div><div class="r" style="left:546.60px;top:287.90px;width:48.90px;height:15.75px;background:#c7e4ec;"></div><div class="r" style="left:595.50px;top:287.90px;width:49.50px;height:15.75px;background:#c7e4ec;"></div><div class="r" style="left:303.40px;top:303.65px;width:48.00px;height:15.75px;background:#a7bfdf;"></div><div class="r" style="left:351.40px;top:303.65px;width:49.00px;height:15.75px;background:#a7bfdf;"></div><div class="r" style="left:400.40px;top:303.65px;width:49.00px;height:15.75px;background:#a7bfdf;"></div><div class="r" style="left:449.40px;top:303.65px;width:49.00px;height:15.75px;background:#a7bfdf;"></div><div class="r" style="left:498.40px;top:303.65px;width:48.20px;height:15.75px;background:#a7bfdf;"></div><div class="r" style="left:546.60px;top:303.65px;width:48.90px;height:15.75px;background:#a7bfdf;"></div><div class="r" style="left:595.50px;top:303.65px;width:49.50px;height:15.75px;background:#a7bfdf;"></div><div class="r" style="left:303.40px;top:319.40px;width:48.00px;height:15.75px;background:#a7bfdf;"></div><div class="r" style="left:351.40px;top:319.40px;width:49.00px;height:15.75px;background:#a7bfdf;"></div><div class="r" style="left:400.40px;top:319.40px;width:49.00px;height:15.75px;background:#a7bfdf;"></div><div class="r" style="left:449.40px;top:319.40px;width:49.00px;height:15.75px;background:#a7bfdf;"></div><div class="r" style="left:498.40px;top:319.40px;width:48.20px;height:15.75px;background:#a7bfdf;"></div><div class="r" style="left:546.60px;top:319.40px;width:48.90px;height:15.75px;background:#a7bfdf;"></div><div class="r" style="left:595.50px;top:319.40px;width:49.50px;height:15.75px;background:#a7bfdf;"></div><div class="r" style="left:303.40px;top:335.15px;width:48.00px;height:15.75px;background:#a7bfdf;"></div><div class="r" style="left:351.40px;top:335.15px;width:49.00px;height:15.75px;background:#a7bfdf;"></div><div class="r" style="left:400.40px;top:335.15px;width:49.00px;height:15.75px;background:#a7bfdf;"></div><div class="r" style="left:449.40px;top:335.15px;width:49.00px;height:15.75px;background:#a7bfdf;"></div><div class="r" style="left:498.40px;top:335.15px;width:48.20px;height:15.75px;background:#a7bfdf;"></div><div class="r" style="left:546.60px;top:335.15px;width:48.90px;height:15.75px;background:#a7bfdf;"></div><div class="r" style="left:595.50px;top:335.15px;width:49.50px;height:15.75px;background:#a7bfdf;"></div><div class="r" style="left:303.40px;top:350.90px;width:48.00px;height:15.75px;background:#a7bfdf;"></div><div class="r" style="left:351.40px;top:350.90px;width:49.00px;height:15.75px;background:#a7bfdf;"></div><div class="r" style="left:400.40px;top:350.90px;width:49.00px;height:15.75px;background:#a7bfdf;"></div><div class="r" style="left:449.40px;top:350.90px;width:49.00px;height:15.75px;background:#a7bfdf;"></div><div class="r" style="left:498.40px;top:350.90px;width:48.20px;height:15.75px;background:#a7bfdf;"></div><div class="r" style="left:546.60px;top:350.90px;width:48.90px;height:15.75px;background:#a7bfdf;"></div><div class="r" style="left:595.50px;top:350.90px;width:49.50px;height:15.75px;background:#a7bfdf;"></div><div class="r" style="left:303.40px;top:366.65px;width:48.00px;height:15.75px;background:#a7bfdf;"></div><div class="r" style="left:351.40px;top:366.65px;width:49.00px;height:15.75px;background:#a7bfdf;"></div><div class="r" style="left:400.40px;top:366.65px;width:49.00px;height:15.75px;background:#a7bfdf;"></div><div class="r" style="left:449.40px;top:366.65px;width:49.00px;height:15.75px;background:#a7bfdf;"></div><div class="r" style="left:498.40px;top:366.65px;width:48.20px;height:15.75px;background:#a7bfdf;"></div><div class="r" style="left:546.60px;top:366.65px;width:48.90px;height:15.75px;background:#a7bfdf;"></div><div class="r" style="left:595.50px;top:366.65px;width:49.50px;height:15.75px;background:#a7bfdf;"></div><div class="r" style="left:303.40px;top:382.40px;width:48.00px;height:15.75px;background:#a7bfdf;"></div><div class="r" style="left:351.40px;top:382.40px;width:49.00px;height:15.75px;background:#a7bfdf;"></div><div class="r" style="left:400.40px;top:382.40px;width:49.00px;height:15.75px;background:#a7bfdf;"></div><div class="r" style="left:449.40px;top:382.40px;width:49.00px;height:15.75px;background:#a7bfdf;"></div><div class="r" style="left:498.40px;top:382.40px;width:48.20px;height:15.75px;background:#a7bfdf;"></div><div class="r" style="left:546.60px;top:382.40px;width:48.90px;height:15.75px;background:#a7bfdf;"></div><div class="r" style="left:595.50px;top:382.40px;width:49.50px;height:15.75px;background:#a7bfdf;"></div><div class="r" style="left:303.40px;top:398.15px;width:48.00px;height:7.55px;background:#c7e4ec;"></div><div class="r" style="left:351.40px;top:398.15px;width:49.00px;height:7.55px;background:#c7e4ec;"></div><div class="r" style="left:400.40px;top:398.15px;width:49.00px;height:7.55px;background:#c7e4ec;"></div><div class="r" style="left:449.40px;top:398.15px;width:49.00px;height:7.55px;background:#c7e4ec;"></div><div class="r" style="left:498.40px;top:398.15px;width:48.20px;height:7.55px;background:#c7e4ec;"></div><div class="r" style="left:546.60px;top:398.15px;width:48.90px;height:7.55px;background:#c7e4ec;"></div><div class="r" style="left:595.50px;top:398.15px;width:49.50px;height:7.55px;background:#c7e4ec;"></div><div class="r" style="left:-7.00px;top:271.65px;width:306.40px;height:1.00px;background:#d3dadd;"></div><div class="r" style="left:303.40px;top:271.65px;width:341.60px;height:1.00px;background:#d3dadd;"></div><div class="r" style="left:-7.00px;top:287.40px;width:306.40px;height:1.00px;background:#d3dadd;"></div><div class="r" style="left:303.40px;top:287.40px;width:341.60px;height:1.00px;background:#d3dadd;"></div><div class="r" style="left:-7.00px;top:303.15px;width:306.40px;height:1.00px;background:#d3dadd;"></div><div class="r" style="left:303.40px;top:303.15px;width:341.60px;height:1.00px;background:#d3dadd;"></div><div class="r" style="left:-7.00px;top:318.90px;width:306.40px;height:1.00px;background:#d3dadd;"></div><div class="r" style="left:303.40px;top:318.90px;width:341.60px;height:1.00px;background:#d3dadd;"></div><div class="r" style="left:-7.00px;top:334.65px;width:306.40px;height:1.00px;background:#d3dadd;"></div><div class="r" style="left:303.40px;top:334.65px;width:341.60px;height:1.00px;background:#d3dadd;"></div><div class="r" style="left:-7.00px;top:350.40px;width:306.40px;height:1.00px;background:#d3dadd;"></div><div class="r" style="left:303.40px;top:350.40px;width:341.60px;height:1.00px;background:#d3dadd;"></div><div class="r" style="left:-7.00px;top:366.15px;width:306.40px;height:1.00px;background:#d3dadd;"></div><div class="r" style="left:303.40px;top:366.15px;width:341.60px;height:1.00px;background:#d3dadd;"></div><div class="r" style="left:-7.00px;top:381.90px;width:306.40px;height:1.00px;background:#d3dadd;"></div><div class="r" style="left:303.40px;top:381.90px;width:341.60px;height:1.00px;background:#d3dadd;"></div><div class="r" style="left:-7.00px;top:397.65px;width:306.40px;height:1.00px;background:#d3dadd;"></div><div class="r" style="left:303.40px;top:397.65px;width:341.60px;height:1.00px;background:#d3dadd;"></div><div class="r" style="left:43.90px;top:256.40px;width:1.00px;height:149.30px;background:#d3dadd;"></div><div class="r" style="left:94.90px;top:256.40px;width:1.00px;height:149.30px;background:#d3dadd;"></div><div class="r" style="left:146.10px;top:256.40px;width:1.00px;height:149.30px;background:#d3dadd;"></div><div class="r" style="left:197.10px;top:256.40px;width:1.00px;height:149.30px;background:#d3dadd;"></div><div class="r" style="left:247.50px;top:256.40px;width:1.00px;height:149.30px;background:#d3dadd;"></div><div class="r" style="left:350.90px;top:256.40px;width:1.00px;height:149.30px;background:#d3dadd;"></div><div class="r" style="left:399.90px;top:256.40px;width:1.00px;height:149.30px;background:#d3dadd;"></div><div class="r" style="left:448.90px;top:256.40px;width:1.00px;height:149.30px;background:#d3dadd;"></div><div class="r" style="left:497.90px;top:256.40px;width:1.00px;height:149.30px;background:#d3dadd;"></div><div class="r" style="left:546.10px;top:256.40px;width:1.00px;height:149.30px;background:#d3dadd;"></div><div class="r" style="left:595.00px;top:256.40px;width:1.00px;height:149.30px;background:#d3dadd;"></div><div class="r" style="left:299.40px;top:238.60px;width:1.00px;height:167.10px;background:#c4c4c4;"></div><div class="r" style="left:302.90px;top:238.60px;width:1.00px;height:167.10px;background:#c4c4c4;"></div><div class="r" style="left:645.00px;top:256.40px;width:14.40px;height:149.30px;background:#dedede;"></div><div class="r" style="left:659.00px;top:238.60px;width:1.00px;height:167.10px;background:#c8c8c8;"></div><div class="r" style="left:645.00px;top:319.80px;width:14.40px;height:19.00px;background:#c4c4c4;"></div><svg style="left:648px;top:261.4px" width="8" height="6" viewBox="0 0 8 6"><path d="M1.2 4.5L4 1.8l2.8 2.7" stroke="#777" stroke-width="1.1" fill="none"/></svg><svg style="left:648px;top:394.7px" width="8" height="6" viewBox="0 0 8 6"><path d="M1.2 1.5L4 4.2l2.8-2.7" stroke="#777" stroke-width="1.1" fill="none"/></svg><div class="t" style="top:257.27px;height:14px;line-height:14px;font-size:10.8px;color:#222222;right:1038.10px;">2.56</div><div class="t" style="top:257.27px;height:14px;line-height:14px;font-size:10.8px;color:#222222;right:987.10px;">-0.01</div><div class="t" style="top:273.02px;height:14px;line-height:14px;font-size:10.8px;color:#222222;right:1038.10px;">4.47</div><div class="t" style="top:273.02px;height:14px;line-height:14px;font-size:10.8px;color:#222222;right:987.10px;">-0.02</div><div class="t" style="top:288.77px;height:14px;line-height:14px;font-size:10.8px;color:#222222;right:1038.10px;">8.54</div><div class="t" style="top:288.77px;height:14px;line-height:14px;font-size:10.8px;color:#222222;right:987.10px;">-0.02</div><div class="t" style="top:304.52px;height:14px;line-height:14px;font-size:10.8px;color:#222222;right:1038.10px;">16.76</div><div class="t" style="top:304.52px;height:14px;line-height:14px;font-size:10.8px;color:#222222;right:987.10px;">-0.04</div><div class="t" style="top:304.52px;height:14px;line-height:14px;font-size:10.8px;color:#222222;right:935.90px;">0.97</div><div class="t" style="top:304.52px;height:14px;line-height:14px;font-size:10.8px;color:#222222;right:884.90px;">-0.01</div><div class="t" style="top:304.52px;height:14px;line-height:14px;font-size:10.8px;color:#222222;right:783.10px;">-1</div><div class="t" style="top:320.27px;height:14px;line-height:14px;font-size:10.8px;color:#222222;right:1038.10px;">30.20</div><div class="t" style="top:320.27px;height:14px;line-height:14px;font-size:10.8px;color:#222222;right:987.10px;">-0.06</div><div class="t" style="top:320.27px;height:14px;line-height:14px;font-size:10.8px;color:#222222;right:935.90px;">2.10</div><div class="t" style="top:320.27px;height:14px;line-height:14px;font-size:10.8px;color:#222222;right:884.90px;">0.00</div><div class="t" style="top:320.27px;height:14px;line-height:14px;font-size:10.8px;color:#222222;right:783.10px;">+2</div><div class="t" style="top:336.02px;height:14px;line-height:14px;font-size:10.8px;color:#222222;right:1038.10px;">46.79</div><div class="t" style="top:336.02px;height:14px;line-height:14px;font-size:10.8px;color:#222222;right:987.10px;">-0.07</div><div class="t" style="top:351.77px;height:14px;line-height:14px;font-size:10.8px;color:#222222;right:1038.10px;">62.75</div><div class="t" style="top:351.77px;height:14px;line-height:14px;font-size:10.8px;color:#222222;right:987.10px;">-0.08</div><div class="t" style="top:367.52px;height:14px;line-height:14px;font-size:10.8px;color:#222222;right:1038.10px;">75.27</div><div class="t" style="top:367.52px;height:14px;line-height:14px;font-size:10.8px;color:#222222;right:987.10px;">-0.07</div><div class="t" style="top:383.27px;height:14px;line-height:14px;font-size:10.8px;color:#222222;right:1038.10px;">83.72</div><div class="t" style="top:383.27px;height:14px;line-height:14px;font-size:10.8px;color:#222222;right:987.10px;">-0.06</div><div class="t" style="top:399.02px;height:14px;line-height:14px;font-size:10.8px;color:#222222;right:1038.10px;">88.97</div><div class="t" style="top:399.02px;height:14px;line-height:14px;font-size:10.8px;color:#222222;right:987.10px;">-0.06</div><div class="t" style="top:257.27px;height:14px;line-height:14px;font-size:10.8px;color:#ee1c24;right:731.10px;">0.365</div><div class="t" style="top:257.27px;height:14px;line-height:14px;font-size:10.8px;color:#222222;right:682.10px;">5.89</div><div class="t" style="top:257.27px;height:14px;line-height:14px;font-size:10.8px;color:#222222;right:633.10px;">-0.02</div><div class="t" style="top:273.02px;height:14px;line-height:14px;font-size:10.8px;color:#ee1c24;right:731.10px;">0.675</div><div class="t" style="top:273.02px;height:14px;line-height:14px;font-size:10.8px;color:#222222;right:682.10px;">10.00</div><div class="t" style="top:273.02px;height:14px;line-height:14px;font-size:10.8px;color:#222222;right:633.10px;">-0.02</div><div class="t" style="top:288.77px;height:14px;line-height:14px;font-size:10.8px;color:#ee1c24;right:731.10px;">1.255</div><div class="t" style="top:288.77px;height:14px;line-height:14px;font-size:10.8px;color:#222222;right:682.10px;">16.51</div><div class="t" style="top:288.77px;height:14px;line-height:14px;font-size:10.8px;color:#222222;right:633.10px;">-0.03</div><div class="t" style="top:304.52px;height:14px;line-height:14px;font-size:10.8px;color:#2a9a2a;right:731.10px;">2.265</div><div class="t" style="top:304.52px;height:14px;line-height:14px;font-size:10.8px;color:#222222;right:682.10px;">25.84</div><div class="t" style="top:304.52px;height:14px;line-height:14px;font-size:10.8px;color:#222222;right:633.10px;">-0.05</div><div class="t" style="top:320.27px;height:14px;line-height:14px;font-size:10.8px;color:#2a9a2a;right:731.10px;">3.875</div><div class="t" style="top:320.27px;height:14px;line-height:14px;font-size:10.8px;color:#222222;right:682.10px;">37.41</div><div class="t" style="top:320.27px;height:14px;line-height:14px;font-size:10.8px;color:#222222;right:633.10px;">-0.06</div><div class="t" style="top:336.02px;height:14px;line-height:14px;font-size:10.8px;color:#ee1c24;right:731.10px;">6.075</div><div class="t" style="top:336.02px;height:14px;line-height:14px;font-size:10.8px;color:#222222;right:682.10px;">49.65</div><div class="t" style="top:336.02px;height:14px;line-height:14px;font-size:10.8px;color:#222222;right:633.10px;">-0.07</div><div class="t" style="top:351.77px;height:14px;line-height:14px;font-size:10.8px;color:#2a9a2a;right:731.10px;">8.975</div><div class="t" style="top:351.77px;height:14px;line-height:14px;font-size:10.8px;color:#222222;right:682.10px;">61.65</div><div class="t" style="top:351.77px;height:14px;line-height:14px;font-size:10.8px;color:#222222;right:633.10px;">-0.07</div><div class="t" style="top:367.52px;height:14px;line-height:14px;font-size:10.8px;color:#2a9a2a;right:731.10px;">12.425</div><div class="t" style="top:367.52px;height:14px;line-height:14px;font-size:10.8px;color:#222222;right:682.10px;">71.69</div><div class="t" style="top:367.52px;height:14px;line-height:14px;font-size:10.8px;color:#222222;right:633.10px;">-0.07</div><div class="t" style="top:383.27px;height:14px;line-height:14px;font-size:10.8px;color:#ee1c24;right:731.10px;">16.325</div><div class="t" style="top:383.27px;height:14px;line-height:14px;font-size:10.8px;color:#222222;right:682.10px;">79.35</div><div class="t" style="top:383.27px;height:14px;line-height:14px;font-size:10.8px;color:#222222;right:633.10px;">-0.06</div><div class="t" style="top:399.02px;height:14px;line-height:14px;font-size:10.8px;color:#ee1c24;right:731.10px;">20.575</div><div class="t" style="top:399.02px;height:14px;line-height:14px;font-size:10.8px;color:#222222;right:682.10px;">85.24</div><div class="t" style="top:399.02px;height:14px;line-height:14px;font-size:10.8px;color:#222222;right:633.10px;">-0.06</div><div class="r" style="left:-20.00px;top:405.70px;width:680.00px;height:10.90px;background:#e3e3e3;"></div><div class="r" style="left:266.00px;top:410.00px;width:1.30px;height:1.20px;background:#8a8a8a;"></div><div class="r" style="left:268.60px;top:410.00px;width:1.30px;height:1.20px;background:#8a8a8a;"></div><div class="r" style="left:271.20px;top:410.00px;width:1.30px;height:1.20px;background:#8a8a8a;"></div><div class="r" style="left:273.80px;top:410.00px;width:1.30px;height:1.20px;background:#8a8a8a;"></div><div class="r" style="left:276.40px;top:410.00px;width:1.30px;height:1.20px;background:#8a8a8a;"></div><div class="r" style="left:664.00px;top:405.50px;width:1.30px;height:1.20px;background:#8a8a8a;"></div><div class="r" style="left:664.00px;top:408.10px;width:1.30px;height:1.20px;background:#8a8a8a;"></div><div class="r" style="left:664.00px;top:410.70px;width:1.30px;height:1.20px;background:#8a8a8a;"></div><div class="r" style="left:664.00px;top:413.30px;width:1.30px;height:1.20px;background:#8a8a8a;"></div><div class="r" style="left:-7.00px;top:416.60px;width:51.40px;height:17.80px;background:#e8e8e8;"></div><div class="r" style="left:44.40px;top:416.60px;width:51.00px;height:17.80px;background:#e8e8e8;"></div><div class="r" style="left:95.40px;top:416.60px;width:51.20px;height:17.80px;background:#e8e8e8;"></div><div class="r" style="left:146.60px;top:416.60px;width:51.00px;height:17.80px;background:#e8e8e8;"></div><div class="r" style="left:197.60px;top:416.60px;width:50.40px;height:17.80px;background:#e8e8e8;"></div><div class="r" style="left:248.00px;top:416.60px;width:51.40px;height:17.80px;background:#e8e8e8;"></div><div class="t" style="top:417.60px;height:14px;line-height:14px;font-size:10.8px;color:#555555;left:-41.30px;width:120px;text-align:center;">Delta</div><div class="t" style="top:417.60px;height:14px;line-height:14px;font-size:10.8px;color:#555555;left:9.90px;width:120px;text-align:center;">Theta</div><div class="t" style="top:417.60px;height:14px;line-height:14px;font-size:10.8px;color:#555555;left:61.00px;width:120px;text-align:center;">OrigPrice</div><div class="t" style="top:417.60px;height:14px;line-height:14px;font-size:10.8px;color:#555555;left:112.10px;width:120px;text-align:center;">IVChg</div><div class="t" style="top:417.60px;height:14px;line-height:14px;font-size:10.8px;color:#555555;left:162.80px;width:120px;text-align:center;">Model</div><div class="t" style="top:417.60px;height:14px;line-height:14px;font-size:10.8px;color:#555555;left:213.70px;width:120px;text-align:center;">Pos</div><div class="r" style="left:43.90px;top:416.60px;width:1.00px;height:17.80px;background:#c9c9c9;"></div><div class="r" style="left:94.90px;top:416.60px;width:1.00px;height:17.80px;background:#c9c9c9;"></div><div class="r" style="left:146.10px;top:416.60px;width:1.00px;height:17.80px;background:#c9c9c9;"></div><div class="r" style="left:197.10px;top:416.60px;width:1.00px;height:17.80px;background:#c9c9c9;"></div><div class="r" style="left:247.50px;top:416.60px;width:1.00px;height:17.80px;background:#c9c9c9;"></div><div class="r" style="left:-7.00px;top:433.90px;width:306.40px;height:1.00px;background:#c9c9c9;"></div><div class="r" style="left:303.40px;top:416.60px;width:48.00px;height:17.80px;background:#e8e8e8;"></div><div class="r" style="left:351.40px;top:416.60px;width:49.00px;height:17.80px;background:#e8e8e8;"></div><div class="r" style="left:400.40px;top:416.60px;width:49.00px;height:17.80px;background:#e8e8e8;"></div><div class="r" style="left:449.40px;top:416.60px;width:49.00px;height:17.80px;background:#e8e8e8;"></div><div class="r" style="left:498.40px;top:416.60px;width:48.20px;height:17.80px;background:#e8e8e8;"></div><div class="r" style="left:546.60px;top:416.60px;width:48.90px;height:17.80px;background:#e8e8e8;"></div><div class="r" style="left:595.50px;top:416.60px;width:49.50px;height:17.80px;background:#e8e8e8;"></div><div class="r" style="left:645.00px;top:416.60px;width:14.40px;height:17.80px;background:#e8e8e8;"></div><div class="t" style="top:417.60px;height:14px;line-height:14px;font-size:10.8px;color:#555555;left:267.40px;width:120px;text-align:center;">Mid</div><div class="t" style="top:417.60px;height:14px;line-height:14px;font-size:10.8px;color:#555555;left:315.90px;width:120px;text-align:center;">Delta</div><div class="t" style="top:417.60px;height:14px;line-height:14px;font-size:10.8px;color:#555555;left:364.90px;width:120px;text-align:center;">Theta</div><div class="t" style="top:417.60px;height:14px;line-height:14px;font-size:10.8px;color:#555555;left:413.90px;width:120px;text-align:center;">OrigPrice</div><div class="t" style="top:417.60px;height:14px;line-height:14px;font-size:10.8px;color:#555555;left:462.50px;width:120px;text-align:center;">IVChg</div><div class="t" style="top:417.60px;height:14px;line-height:14px;font-size:10.8px;color:#555555;left:511.05px;width:120px;text-align:center;">Model</div><div class="t" style="top:417.60px;height:14px;line-height:14px;font-size:10.8px;color:#555555;left:560.25px;width:120px;text-align:center;">Pos</div><div class="r" style="left:350.90px;top:416.60px;width:1.00px;height:17.80px;background:#c9c9c9;"></div><div class="r" style="left:399.90px;top:416.60px;width:1.00px;height:17.80px;background:#c9c9c9;"></div><div class="r" style="left:448.90px;top:416.60px;width:1.00px;height:17.80px;background:#c9c9c9;"></div><div class="r" style="left:497.90px;top:416.60px;width:1.00px;height:17.80px;background:#c9c9c9;"></div><div class="r" style="left:546.10px;top:416.60px;width:1.00px;height:17.80px;background:#c9c9c9;"></div><div class="r" style="left:595.00px;top:416.60px;width:1.00px;height:17.80px;background:#c9c9c9;"></div><div class="r" style="left:644.50px;top:416.60px;width:1.00px;height:17.80px;background:#c9c9c9;"></div><div class="r" style="left:303.40px;top:433.90px;width:356.00px;height:1.00px;background:#c9c9c9;"></div><div class="r" style="left:-20.00px;top:416.60px;width:319.90px;height:1.00px;background:#c9c9c9;"></div><div class="r" style="left:303.40px;top:416.60px;width:356.50px;height:1.00px;background:#c9c9c9;"></div><div class="r" style="left:-7.00px;top:434.40px;width:51.40px;height:15.75px;background:#c7e4ec;"></div><div class="r" style="left:44.40px;top:434.40px;width:51.00px;height:15.75px;background:#c7e4ec;"></div><div class="r" style="left:95.40px;top:434.40px;width:51.20px;height:15.75px;background:#c7e4ec;"></div><div class="r" style="left:146.60px;top:434.40px;width:51.00px;height:15.75px;background:#c7e4ec;"></div><div class="r" style="left:197.60px;top:434.40px;width:50.40px;height:15.75px;background:#c7e4ec;"></div><div class="r" style="left:248.00px;top:434.40px;width:51.40px;height:15.75px;background:#c7e4ec;"></div><div class="r" style="left:-7.00px;top:450.15px;width:51.40px;height:15.75px;background:#a7bfdf;"></div><div class="r" style="left:44.40px;top:450.15px;width:51.00px;height:15.75px;background:#a7bfdf;"></div><div class="r" style="left:95.40px;top:450.15px;width:51.20px;height:15.75px;background:#a7bfdf;"></div><div class="r" style="left:146.60px;top:450.15px;width:51.00px;height:15.75px;background:#a7bfdf;"></div><div class="r" style="left:197.60px;top:450.15px;width:50.40px;height:15.75px;background:#a7bfdf;"></div><div class="r" style="left:248.00px;top:450.15px;width:51.40px;height:15.75px;background:#a7bfdf;"></div><div class="r" style="left:-7.00px;top:465.90px;width:51.40px;height:15.75px;background:#a7bfdf;"></div><div class="r" style="left:44.40px;top:465.90px;width:51.00px;height:15.75px;background:#a7bfdf;"></div><div class="r" style="left:95.40px;top:465.90px;width:51.20px;height:15.75px;background:#a7bfdf;"></div><div class="r" style="left:146.60px;top:465.90px;width:51.00px;height:15.75px;background:#a7bfdf;"></div><div class="r" style="left:197.60px;top:465.90px;width:50.40px;height:15.75px;background:#a7bfdf;"></div><div class="r" style="left:248.00px;top:465.90px;width:51.40px;height:15.75px;background:#a7bfdf;"></div><div class="r" style="left:-7.00px;top:481.65px;width:51.40px;height:15.75px;background:#a7bfdf;"></div><div class="r" style="left:44.40px;top:481.65px;width:51.00px;height:15.75px;background:#a7bfdf;"></div><div class="r" style="left:95.40px;top:481.65px;width:51.20px;height:15.75px;background:#a7bfdf;"></div><div class="r" style="left:146.60px;top:481.65px;width:51.00px;height:15.75px;background:#a7bfdf;"></div><div class="r" style="left:197.60px;top:481.65px;width:50.40px;height:15.75px;background:#a7bfdf;"></div><div class="r" style="left:248.00px;top:481.65px;width:51.40px;height:15.75px;background:#a7bfdf;"></div><div class="r" style="left:-7.00px;top:497.40px;width:51.40px;height:15.75px;background:#a7bfdf;"></div><div class="r" style="left:44.40px;top:497.40px;width:51.00px;height:15.75px;background:#a7bfdf;"></div><div class="r" style="left:95.40px;top:497.40px;width:51.20px;height:15.75px;background:#a7bfdf;"></div><div class="r" style="left:146.60px;top:497.40px;width:51.00px;height:15.75px;background:#a7bfdf;"></div><div class="r" style="left:197.60px;top:497.40px;width:50.40px;height:15.75px;background:#a7bfdf;"></div><div class="r" style="left:248.00px;top:497.40px;width:51.40px;height:15.75px;background:#a7bfdf;"></div><div class="r" style="left:-7.00px;top:513.15px;width:51.40px;height:15.75px;background:#c7e4ec;"></div><div class="r" style="left:44.40px;top:513.15px;width:51.00px;height:15.75px;background:#c7e4ec;"></div><div class="r" style="left:95.40px;top:513.15px;width:51.20px;height:15.75px;background:#c7e4ec;"></div><div class="r" style="left:146.60px;top:513.15px;width:51.00px;height:15.75px;background:#c7e4ec;"></div><div class="r" style="left:197.60px;top:513.15px;width:50.40px;height:15.75px;background:#c7e4ec;"></div><div class="r" style="left:248.00px;top:513.15px;width:51.40px;height:15.75px;background:#c7e4ec;"></div><div class="r" style="left:-7.00px;top:528.90px;width:51.40px;height:15.75px;background:#c7e4ec;"></div><div class="r" style="left:44.40px;top:528.90px;width:51.00px;height:15.75px;background:#c7e4ec;"></div><div class="r" style="left:95.40px;top:528.90px;width:51.20px;height:15.75px;background:#c7e4ec;"></div><div class="r" style="left:146.60px;top:528.90px;width:51.00px;height:15.75px;background:#c7e4ec;"></div><div class="r" style="left:197.60px;top:528.90px;width:50.40px;height:15.75px;background:#c7e4ec;"></div><div class="r" style="left:248.00px;top:528.90px;width:51.40px;height:15.75px;background:#c7e4ec;"></div><div class="r" style="left:-7.00px;top:544.65px;width:51.40px;height:15.75px;background:#c7e4ec;"></div><div class="r" style="left:44.40px;top:544.65px;width:51.00px;height:15.75px;background:#c7e4ec;"></div><div class="r" style="left:95.40px;top:544.65px;width:51.20px;height:15.75px;background:#c7e4ec;"></div><div class="r" style="left:146.60px;top:544.65px;width:51.00px;height:15.75px;background:#c7e4ec;"></div><div class="r" style="left:197.60px;top:544.65px;width:50.40px;height:15.75px;background:#c7e4ec;"></div><div class="r" style="left:248.00px;top:544.65px;width:51.40px;height:15.75px;background:#c7e4ec;"></div><div class="r" style="left:-7.00px;top:560.40px;width:51.40px;height:15.75px;background:#ffffff;"></div><div class="r" style="left:44.40px;top:560.40px;width:51.00px;height:15.75px;background:#ffffff;"></div><div class="r" style="left:95.40px;top:560.40px;width:51.20px;height:15.75px;background:#ffffff;"></div><div class="r" style="left:146.60px;top:560.40px;width:51.00px;height:15.75px;background:#ffffff;"></div><div class="r" style="left:197.60px;top:560.40px;width:50.40px;height:15.75px;background:#ffffff;"></div><div class="r" style="left:248.00px;top:560.40px;width:51.40px;height:15.75px;background:#ffffff;"></div><div class="r" style="left:-7.00px;top:576.15px;width:51.40px;height:14.85px;background:#ffffff;"></div><div class="r" style="left:44.40px;top:576.15px;width:51.00px;height:14.85px;background:#ffffff;"></div><div class="r" style="left:95.40px;top:576.15px;width:51.20px;height:14.85px;background:#ffffff;"></div><div class="r" style="left:146.60px;top:576.15px;width:51.00px;height:14.85px;background:#ffffff;"></div><div class="r" style="left:197.60px;top:576.15px;width:50.40px;height:14.85px;background:#ffffff;"></div><div class="r" style="left:248.00px;top:576.15px;width:51.40px;height:14.85px;background:#ffffff;"></div><div class="r" style="left:303.40px;top:434.40px;width:48.00px;height:15.75px;background:#a7bfdf;"></div><div class="r" style="left:351.40px;top:434.40px;width:49.00px;height:15.75px;background:#a7bfdf;"></div><div class="r" style="left:400.40px;top:434.40px;width:49.00px;height:15.75px;background:#a7bfdf;"></div><div class="r" style="left:449.40px;top:434.40px;width:49.00px;height:15.75px;background:#a7bfdf;"></div><div class="r" style="left:498.40px;top:434.40px;width:48.20px;height:15.75px;background:#a7bfdf;"></div><div class="r" style="left:546.60px;top:434.40px;width:48.90px;height:15.75px;background:#a7bfdf;"></div><div class="r" style="left:595.50px;top:434.40px;width:49.50px;height:15.75px;background:#a7bfdf;"></div><div class="r" style="left:303.40px;top:450.15px;width:48.00px;height:15.75px;background:#a7bfdf;"></div><div class="r" style="left:351.40px;top:450.15px;width:49.00px;height:15.75px;background:#a7bfdf;"></div><div class="r" style="left:400.40px;top:450.15px;width:49.00px;height:15.75px;background:#a7bfdf;"></div><div class="r" style="left:449.40px;top:450.15px;width:49.00px;height:15.75px;background:#a7bfdf;"></div><div class="r" style="left:498.40px;top:450.15px;width:48.20px;height:15.75px;background:#a7bfdf;"></div><div class="r" style="left:546.60px;top:450.15px;width:48.90px;height:15.75px;background:#a7bfdf;"></div><div class="r" style="left:595.50px;top:450.15px;width:49.50px;height:15.75px;background:#a7bfdf;"></div><div class="r" style="left:303.40px;top:465.90px;width:48.00px;height:15.75px;background:#a7bfdf;"></div><div class="r" style="left:351.40px;top:465.90px;width:49.00px;height:15.75px;background:#a7bfdf;"></div><div class="r" style="left:400.40px;top:465.90px;width:49.00px;height:15.75px;background:#a7bfdf;"></div><div class="r" style="left:449.40px;top:465.90px;width:49.00px;height:15.75px;background:#a7bfdf;"></div><div class="r" style="left:498.40px;top:465.90px;width:48.20px;height:15.75px;background:#a7bfdf;"></div><div class="r" style="left:546.60px;top:465.90px;width:48.90px;height:15.75px;background:#a7bfdf;"></div><div class="r" style="left:595.50px;top:465.90px;width:49.50px;height:15.75px;background:#a7bfdf;"></div><div class="r" style="left:303.40px;top:481.65px;width:48.00px;height:15.75px;background:#a7bfdf;"></div><div class="r" style="left:351.40px;top:481.65px;width:49.00px;height:15.75px;background:#a7bfdf;"></div><div class="r" style="left:400.40px;top:481.65px;width:49.00px;height:15.75px;background:#a7bfdf;"></div><div class="r" style="left:449.40px;top:481.65px;width:49.00px;height:15.75px;background:#a7bfdf;"></div><div class="r" style="left:498.40px;top:481.65px;width:48.20px;height:15.75px;background:#a7bfdf;"></div><div class="r" style="left:546.60px;top:481.65px;width:48.90px;height:15.75px;background:#a7bfdf;"></div><div class="r" style="left:595.50px;top:481.65px;width:49.50px;height:15.75px;background:#a7bfdf;"></div><div class="r" style="left:303.40px;top:497.40px;width:48.00px;height:15.75px;background:#a7bfdf;"></div><div class="r" style="left:351.40px;top:497.40px;width:49.00px;height:15.75px;background:#a7bfdf;"></div><div class="r" style="left:400.40px;top:497.40px;width:49.00px;height:15.75px;background:#a7bfdf;"></div><div class="r" style="left:449.40px;top:497.40px;width:49.00px;height:15.75px;background:#a7bfdf;"></div><div class="r" style="left:498.40px;top:497.40px;width:48.20px;height:15.75px;background:#a7bfdf;"></div><div class="r" style="left:546.60px;top:497.40px;width:48.90px;height:15.75px;background:#a7bfdf;"></div><div class="r" style="left:595.50px;top:497.40px;width:49.50px;height:15.75px;background:#a7bfdf;"></div><div class="r" style="left:303.40px;top:513.15px;width:48.00px;height:15.75px;background:#a7bfdf;"></div><div class="r" style="left:351.40px;top:513.15px;width:49.00px;height:15.75px;background:#a7bfdf;"></div><div class="r" style="left:400.40px;top:513.15px;width:49.00px;height:15.75px;background:#a7bfdf;"></div><div class="r" style="left:449.40px;top:513.15px;width:49.00px;height:15.75px;background:#a7bfdf;"></div><div class="r" style="left:498.40px;top:513.15px;width:48.20px;height:15.75px;background:#a7bfdf;"></div><div class="r" style="left:546.60px;top:513.15px;width:48.90px;height:15.75px;background:#a7bfdf;"></div><div class="r" style="left:595.50px;top:513.15px;width:49.50px;height:15.75px;background:#a7bfdf;"></div><div class="r" style="left:303.40px;top:528.90px;width:48.00px;height:15.75px;background:#c7e4ec;"></div><div class="r" style="left:351.40px;top:528.90px;width:49.00px;height:15.75px;background:#c7e4ec;"></div><div class="r" style="left:400.40px;top:528.90px;width:49.00px;height:15.75px;background:#c7e4ec;"></div><div class="r" style="left:449.40px;top:528.90px;width:49.00px;height:15.75px;background:#c7e4ec;"></div><div class="r" style="left:498.40px;top:528.90px;width:48.20px;height:15.75px;background:#c7e4ec;"></div><div class="r" style="left:546.60px;top:528.90px;width:48.90px;height:15.75px;background:#c7e4ec;"></div><div class="r" style="left:595.50px;top:528.90px;width:49.50px;height:15.75px;background:#c7e4ec;"></div><div class="r" style="left:303.40px;top:544.65px;width:48.00px;height:15.75px;background:#c7e4ec;"></div><div class="r" style="left:351.40px;top:544.65px;width:49.00px;height:15.75px;background:#c7e4ec;"></div><div class="r" style="left:400.40px;top:544.65px;width:49.00px;height:15.75px;background:#c7e4ec;"></div><div class="r" style="left:449.40px;top:544.65px;width:49.00px;height:15.75px;background:#c7e4ec;"></div><div class="r" style="left:498.40px;top:544.65px;width:48.20px;height:15.75px;background:#c7e4ec;"></div><div class="r" style="left:546.60px;top:544.65px;width:48.90px;height:15.75px;background:#c7e4ec;"></div><div class="r" style="left:595.50px;top:544.65px;width:49.50px;height:15.75px;background:#c7e4ec;"></div><div class="r" style="left:303.40px;top:560.40px;width:48.00px;height:15.75px;background:#c7e4ec;"></div><div class="r" style="left:351.40px;top:560.40px;width:49.00px;height:15.75px;background:#c7e4ec;"></div><div class="r" style="left:400.40px;top:560.40px;width:49.00px;height:15.75px;background:#c7e4ec;"></div><div class="r" style="left:449.40px;top:560.40px;width:49.00px;height:15.75px;background:#c7e4ec;"></div><div class="r" style="left:498.40px;top:560.40px;width:48.20px;height:15.75px;background:#c7e4ec;"></div><div class="r" style="left:546.60px;top:560.40px;width:48.90px;height:15.75px;background:#c7e4ec;"></div><div class="r" style="left:595.50px;top:560.40px;width:49.50px;height:15.75px;background:#c7e4ec;"></div><div class="r" style="left:303.40px;top:576.15px;width:48.00px;height:14.85px;background:#ffffff;"></div><div class="r" style="left:351.40px;top:576.15px;width:49.00px;height:14.85px;background:#ffffff;"></div><div class="r" style="left:400.40px;top:576.15px;width:49.00px;height:14.85px;background:#ffffff;"></div><div class="r" style="left:449.40px;top:576.15px;width:49.00px;height:14.85px;background:#ffffff;"></div><div class="r" style="left:498.40px;top:576.15px;width:48.20px;height:14.85px;background:#ffffff;"></div><div class="r" style="left:546.60px;top:576.15px;width:48.90px;height:14.85px;background:#ffffff;"></div><div class="r" style="left:595.50px;top:576.15px;width:49.50px;height:14.85px;background:#ffffff;"></div><div class="r" style="left:-7.00px;top:449.65px;width:306.40px;height:1.00px;background:#d3dadd;"></div><div class="r" style="left:303.40px;top:449.65px;width:341.60px;height:1.00px;background:#d3dadd;"></div><div class="r" style="left:-7.00px;top:465.40px;width:306.40px;height:1.00px;background:#d3dadd;"></div><div class="r" style="left:303.40px;top:465.40px;width:341.60px;height:1.00px;background:#d3dadd;"></div><div class="r" style="left:-7.00px;top:481.15px;width:306.40px;height:1.00px;background:#d3dadd;"></div><div class="r" style="left:303.40px;top:481.15px;width:341.60px;height:1.00px;background:#d3dadd;"></div><div class="r" style="left:-7.00px;top:496.90px;width:306.40px;height:1.00px;background:#d3dadd;"></div><div class="r" style="left:303.40px;top:496.90px;width:341.60px;height:1.00px;background:#d3dadd;"></div><div class="r" style="left:-7.00px;top:512.65px;width:306.40px;height:1.00px;background:#d3dadd;"></div><div class="r" style="left:303.40px;top:512.65px;width:341.60px;height:1.00px;background:#d3dadd;"></div><div class="r" style="left:-7.00px;top:528.40px;width:306.40px;height:1.00px;background:#d3dadd;"></div><div class="r" style="left:303.40px;top:528.40px;width:341.60px;height:1.00px;background:#d3dadd;"></div><div class="r" style="left:-7.00px;top:544.15px;width:306.40px;height:1.00px;background:#d3dadd;"></div><div class="r" style="left:303.40px;top:544.15px;width:341.60px;height:1.00px;background:#d3dadd;"></div><div class="r" style="left:-7.00px;top:559.90px;width:306.40px;height:1.00px;background:#d3dadd;"></div><div class="r" style="left:303.40px;top:559.90px;width:341.60px;height:1.00px;background:#d3dadd;"></div><div class="r" style="left:-7.00px;top:575.65px;width:306.40px;height:1.00px;background:#d3dadd;"></div><div class="r" style="left:303.40px;top:575.65px;width:341.60px;height:1.00px;background:#d3dadd;"></div><div class="r" style="left:43.90px;top:434.40px;width:1.00px;height:156.60px;background:#d3dadd;"></div><div class="r" style="left:94.90px;top:434.40px;width:1.00px;height:156.60px;background:#d3dadd;"></div><div class="r" style="left:146.10px;top:434.40px;width:1.00px;height:156.60px;background:#d3dadd;"></div><div class="r" style="left:197.10px;top:434.40px;width:1.00px;height:156.60px;background:#d3dadd;"></div><div class="r" style="left:247.50px;top:434.40px;width:1.00px;height:156.60px;background:#d3dadd;"></div><div class="r" style="left:350.90px;top:434.40px;width:1.00px;height:156.60px;background:#d3dadd;"></div><div class="r" style="left:399.90px;top:434.40px;width:1.00px;height:156.60px;background:#d3dadd;"></div><div class="r" style="left:448.90px;top:434.40px;width:1.00px;height:156.60px;background:#d3dadd;"></div><div class="r" style="left:497.90px;top:434.40px;width:1.00px;height:156.60px;background:#d3dadd;"></div><div class="r" style="left:546.10px;top:434.40px;width:1.00px;height:156.60px;background:#d3dadd;"></div><div class="r" style="left:595.00px;top:434.40px;width:1.00px;height:156.60px;background:#d3dadd;"></div><div class="r" style="left:299.40px;top:416.60px;width:1.00px;height:174.40px;background:#c4c4c4;"></div><div class="r" style="left:302.90px;top:416.60px;width:1.00px;height:174.40px;background:#c4c4c4;"></div><div class="r" style="left:645.00px;top:434.40px;width:14.40px;height:156.60px;background:#dedede;"></div><div class="r" style="left:659.00px;top:416.60px;width:1.00px;height:174.40px;background:#c8c8c8;"></div><div class="r" style="left:645.00px;top:508.00px;width:14.40px;height:19.00px;background:#c4c4c4;"></div><svg style="left:648px;top:439.4px" width="8" height="6" viewBox="0 0 8 6"><path d="M1.2 4.5L4 1.8l2.8 2.7" stroke="#777" stroke-width="1.1" fill="none"/></svg><svg style="left:648px;top:580.0px" width="8" height="6" viewBox="0 0 8 6"><path d="M1.2 1.5L4 4.2l2.8-2.7" stroke="#777" stroke-width="1.1" fill="none"/></svg><div class="t" style="top:435.27px;height:14px;line-height:14px;font-size:10.8px;color:#222222;right:1038.10px;">-81.78</div><div class="t" style="top:435.27px;height:14px;line-height:14px;font-size:10.8px;color:#222222;right:987.10px;">-0.02</div><div class="t" style="top:451.02px;height:14px;line-height:14px;font-size:10.8px;color:#222222;right:1038.10px;">-70.16</div><div class="t" style="top:451.02px;height:14px;line-height:14px;font-size:10.8px;color:#222222;right:987.10px;">-0.03</div><div class="t" style="top:466.77px;height:14px;line-height:14px;font-size:10.8px;color:#222222;right:1038.10px;">-53.39</div><div class="t" style="top:466.77px;height:14px;line-height:14px;font-size:10.8px;color:#222222;right:987.10px;">-0.05</div><div class="t" style="top:482.52px;height:14px;line-height:14px;font-size:10.8px;color:#222222;right:1038.10px;">-36.63</div><div class="t" style="top:482.52px;height:14px;line-height:14px;font-size:10.8px;color:#222222;right:987.10px;">-0.05</div><div class="t" style="top:498.27px;height:14px;line-height:14px;font-size:10.8px;color:#222222;right:1038.10px;">-23.31</div><div class="t" style="top:498.27px;height:14px;line-height:14px;font-size:10.8px;color:#222222;right:987.10px;">-0.05</div><div class="t" style="top:498.27px;height:14px;line-height:14px;font-size:10.8px;color:#222222;right:935.90px;">1.80</div><div class="t" style="top:498.27px;height:14px;line-height:14px;font-size:10.8px;color:#222222;right:884.90px;">0.02</div><div class="t" style="top:498.27px;height:14px;line-height:14px;font-size:10.8px;color:#222222;right:783.10px;">+2</div><div class="t" style="top:514.02px;height:14px;line-height:14px;font-size:10.8px;color:#222222;right:1038.10px;">-14.30</div><div class="t" style="top:514.02px;height:14px;line-height:14px;font-size:10.8px;color:#222222;right:987.10px;">-0.04</div><div class="t" style="top:529.77px;height:14px;line-height:14px;font-size:10.8px;color:#222222;right:1038.10px;">-8.92</div><div class="t" style="top:529.77px;height:14px;line-height:14px;font-size:10.8px;color:#222222;right:987.10px;">-0.03</div><div class="t" style="top:545.52px;height:14px;line-height:14px;font-size:10.8px;color:#222222;right:1038.10px;">-5.79</div><div class="t" style="top:545.52px;height:14px;line-height:14px;font-size:10.8px;color:#222222;right:987.10px;">-0.02</div><div class="t" style="top:545.52px;height:14px;line-height:14px;font-size:10.8px;color:#222222;right:935.90px;">0.42</div><div class="t" style="top:545.52px;height:14px;line-height:14px;font-size:10.8px;color:#222222;right:884.90px;">0.11</div><div class="t" style="top:545.52px;height:14px;line-height:14px;font-size:10.8px;color:#222222;right:783.10px;">-1</div><div class="t" style="top:561.27px;height:14px;line-height:14px;font-size:10.8px;color:#222222;right:1038.10px;">-3.88</div><div class="t" style="top:561.27px;height:14px;line-height:14px;font-size:10.8px;color:#222222;right:987.10px;">-0.02</div><div class="t" style="top:577.02px;height:14px;line-height:14px;font-size:10.8px;color:#222222;right:1038.10px;">-2.71</div><div class="t" style="top:577.02px;height:14px;line-height:14px;font-size:10.8px;color:#222222;right:987.10px;">-0.02</div><div class="t" style="top:435.27px;height:14px;line-height:14px;font-size:10.8px;color:#2a9a2a;right:731.10px;">13.15</div><div class="t" style="top:435.27px;height:14px;line-height:14px;font-size:10.8px;color:#222222;right:682.10px;">-73.66</div><div class="t" style="top:435.27px;height:14px;line-height:14px;font-size:10.8px;color:#222222;right:633.10px;">-0.02</div><div class="t" style="top:451.02px;height:14px;line-height:14px;font-size:10.8px;color:#2a9a2a;right:731.10px;">9.625</div><div class="t" style="top:451.02px;height:14px;line-height:14px;font-size:10.8px;color:#222222;right:682.10px;">-62.75</div><div class="t" style="top:451.02px;height:14px;line-height:14px;font-size:10.8px;color:#222222;right:633.10px;">-0.03</div><div class="t" style="top:466.77px;height:14px;line-height:14px;font-size:10.8px;color:#2a9a2a;right:731.10px;">6.825</div><div class="t" style="top:466.77px;height:14px;line-height:14px;font-size:10.8px;color:#222222;right:682.10px;">-50.26</div><div class="t" style="top:466.77px;height:14px;line-height:14px;font-size:10.8px;color:#222222;right:633.10px;">-0.04</div><div class="t" style="top:482.52px;height:14px;line-height:14px;font-size:10.8px;color:#2a9a2a;right:731.10px;">4.725</div><div class="t" style="top:482.52px;height:14px;line-height:14px;font-size:10.8px;color:#222222;right:682.10px;">-38.28</div><div class="t" style="top:482.52px;height:14px;line-height:14px;font-size:10.8px;color:#222222;right:633.10px;">-0.05</div><div class="t" style="top:498.27px;height:14px;line-height:14px;font-size:10.8px;color:#2a9a2a;right:731.10px;">3.175</div><div class="t" style="top:498.27px;height:14px;line-height:14px;font-size:10.8px;color:#222222;right:682.10px;">-27.86</div><div class="t" style="top:498.27px;height:14px;line-height:14px;font-size:10.8px;color:#222222;right:633.10px;">-0.04</div><div class="t" style="top:514.02px;height:14px;line-height:14px;font-size:10.8px;color:#2a9a2a;right:731.10px;">2.115</div><div class="t" style="top:514.02px;height:14px;line-height:14px;font-size:10.8px;color:#222222;right:682.10px;">-19.77</div><div class="t" style="top:514.02px;height:14px;line-height:14px;font-size:10.8px;color:#222222;right:633.10px;">-0.04</div><div class="t" style="top:529.77px;height:14px;line-height:14px;font-size:10.8px;color:#ee1c24;right:731.10px;">1.415</div><div class="t" style="top:529.77px;height:14px;line-height:14px;font-size:10.8px;color:#222222;right:682.10px;">-13.73</div><div class="t" style="top:529.77px;height:14px;line-height:14px;font-size:10.8px;color:#222222;right:633.10px;">-0.03</div><div class="t" style="top:545.52px;height:14px;line-height:14px;font-size:10.8px;color:#ee1c24;right:731.10px;">0.975</div><div class="t" style="top:545.52px;height:14px;line-height:14px;font-size:10.8px;color:#222222;right:682.10px;">-9.59</div><div class="t" style="top:545.52px;height:14px;line-height:14px;font-size:10.8px;color:#222222;right:633.10px;">-0.03</div><div class="t" style="top:561.27px;height:14px;line-height:14px;font-size:10.8px;color:#2a9a2a;right:731.10px;">0.695</div><div class="t" style="top:561.27px;height:14px;line-height:14px;font-size:10.8px;color:#222222;right:682.10px;">-6.80</div><div class="t" style="top:561.27px;height:14px;line-height:14px;font-size:10.8px;color:#222222;right:633.10px;">-0.02</div><div class="t" style="top:577.02px;height:14px;line-height:14px;font-size:10.8px;color:#222222;right:731.10px;">0.515</div><div class="t" style="top:577.02px;height:14px;line-height:14px;font-size:10.8px;color:#222222;right:682.10px;">-4.91</div><div class="t" style="top:577.02px;height:14px;line-height:14px;font-size:10.8px;color:#222222;right:633.10px;">-0.02</div><div class="r" style="left:266.00px;top:594.50px;width:1.30px;height:1.20px;background:#8a8a8a;"></div><div class="r" style="left:268.60px;top:594.50px;width:1.30px;height:1.20px;background:#8a8a8a;"></div><div class="r" style="left:271.20px;top:594.50px;width:1.30px;height:1.20px;background:#8a8a8a;"></div><div class="r" style="left:273.80px;top:594.50px;width:1.30px;height:1.20px;background:#8a8a8a;"></div><div class="r" style="left:276.40px;top:594.50px;width:1.30px;height:1.20px;background:#8a8a8a;"></div><div class="r" style="left:-20.00px;top:603.60px;width:111.50px;height:15.60px;background:#ffffff;box-shadow:inset 0 0 0 1px #bdbdbd;"></div><div class="t" style="top:604.50px;height:14px;line-height:14px;font-size:10.8px;color:#222;left:-20.20px;">Closed</div><div class="r" style="left:77.00px;top:604.60px;width:14.00px;height:13.60px;background:#ececec;"></div><div class="r" style="left:77.00px;top:604.60px;width:1.00px;height:13.60px;background:#cfcfcf;"></div><svg style="left:81px;top:609px" width="7" height="5" viewBox="0 0 7 5"><path d="M1 1l2.5 2.5L6 1" stroke="#555" stroke-width="1.1" fill="none"/></svg><div class="r" style="left:98.40px;top:603.60px;width:68.10px;height:15.60px;background:#ffffff;box-shadow:inset 0 0 0 1px #bdbdbd;"></div><div class="t" style="top:604.50px;height:14px;line-height:14px;font-size:10.8px;color:#222;left:101.50px;">All</div><div class="r" style="left:152.00px;top:604.60px;width:14.00px;height:13.60px;background:#ececec;"></div><div class="r" style="left:152.00px;top:604.60px;width:1.00px;height:13.60px;background:#cfcfcf;"></div><svg style="left:156px;top:609px" width="7" height="5" viewBox="0 0 7 5"><path d="M1 1l2.5 2.5L6 1" stroke="#555" stroke-width="1.1" fill="none"/></svg><div class="r" style="left:541.00px;top:606.00px;width:9.00px;height:9.00px;background:#ffffff;box-shadow:inset 0 0 0 1px #a8a8a8;"></div><div class="t" style="top:603.80px;height:14px;line-height:14px;font-size:10.8px;color:#333;left:553.50px;letter-spacing:-0.1px;">Ignore Today&#39;s Trades</div><div class="r" style="left:-30.00px;top:622.00px;width:33.60px;height:18.30px;background:#e8e8e8;"></div><div class="r" style="left:3.60px;top:622.00px;width:58.80px;height:18.30px;background:#e8e8e8;"></div><div class="r" style="left:62.40px;top:622.00px;width:59.00px;height:18.30px;background:#e8e8e8;"></div><div class="r" style="left:121.40px;top:622.00px;width:59.20px;height:18.30px;background:#e8e8e8;"></div><div class="r" style="left:180.60px;top:622.00px;width:58.80px;height:18.30px;background:#e8e8e8;"></div><div class="r" style="left:239.40px;top:622.00px;width:59.60px;height:18.30px;background:#e8e8e8;"></div><div class="r" style="left:299.00px;top:622.00px;width:59.00px;height:18.30px;background:#e8e8e8;"></div><div class="r" style="left:358.00px;top:622.00px;width:59.40px;height:18.30px;background:#e8e8e8;"></div><div class="r" style="left:417.40px;top:622.00px;width:59.10px;height:18.30px;background:#e8e8e8;"></div><div class="r" style="left:476.50px;top:622.00px;width:58.80px;height:18.30px;background:#e8e8e8;"></div><div class="r" style="left:535.30px;top:622.00px;width:59.10px;height:18.30px;background:#e8e8e8;"></div><div class="r" style="left:594.40px;top:622.00px;width:64.90px;height:18.30px;background:#e8e8e8;"></div><div class="t" style="top:624.15px;height:14px;line-height:14px;font-size:10.8px;color:#555555;left:-27.00px;width:120px;text-align:center;">Cost</div><div class="t" style="top:624.15px;height:14px;line-height:14px;font-size:10.8px;color:#555555;left:31.90px;width:120px;text-align:center;">Curr Cost</div><div class="t" style="top:624.15px;height:14px;line-height:14px;font-size:10.8px;color:#555555;left:91.00px;width:120px;text-align:center;">Commissi...</div><div class="t" style="top:624.15px;height:14px;line-height:14px;font-size:10.8px;color:#555555;left:150.00px;width:120px;text-align:center;">PnL</div><div class="t" style="top:624.15px;height:14px;line-height:14px;font-size:10.8px;color:#555555;left:209.20px;width:120px;text-align:center;">PnL%</div><div class="t" style="top:624.15px;height:14px;line-height:14px;font-size:10.8px;color:#555555;left:268.50px;width:120px;text-align:center;">Delta</div><div class="t" style="top:624.15px;height:14px;line-height:14px;font-size:10.8px;color:#555555;left:327.70px;width:120px;text-align:center;">Gamma</div><div class="t" style="top:624.15px;height:14px;line-height:14px;font-size:10.8px;color:#555555;left:386.95px;width:120px;text-align:center;">Theta</div><div class="t" style="top:624.15px;height:14px;line-height:14px;font-size:10.8px;color:#555555;left:445.90px;width:120px;text-align:center;">Vega</div><div class="t" style="top:624.15px;height:14px;line-height:14px;font-size:10.8px;color:#555555;left:504.85px;width:120px;text-align:center;">T/D</div><div class="t" style="top:624.15px;height:14px;line-height:14px;font-size:10.8px;color:#555555;left:566.85px;width:120px;text-align:center;">Plot</div><div class="r" style="left:3.10px;top:622.00px;width:1.00px;height:18.30px;background:#c9c9c9;"></div><div class="r" style="left:61.90px;top:622.00px;width:1.00px;height:18.30px;background:#c9c9c9;"></div><div class="r" style="left:120.90px;top:622.00px;width:1.00px;height:18.30px;background:#c9c9c9;"></div><div class="r" style="left:180.10px;top:622.00px;width:1.00px;height:18.30px;background:#c9c9c9;"></div><div class="r" style="left:238.90px;top:622.00px;width:1.00px;height:18.30px;background:#c9c9c9;"></div><div class="r" style="left:298.50px;top:622.00px;width:1.00px;height:18.30px;background:#c9c9c9;"></div><div class="r" style="left:357.50px;top:622.00px;width:1.00px;height:18.30px;background:#c9c9c9;"></div><div class="r" style="left:416.90px;top:622.00px;width:1.00px;height:18.30px;background:#c9c9c9;"></div><div class="r" style="left:476.00px;top:622.00px;width:1.00px;height:18.30px;background:#c9c9c9;"></div><div class="r" style="left:534.80px;top:622.00px;width:1.00px;height:18.30px;background:#c9c9c9;"></div><div class="r" style="left:593.90px;top:622.00px;width:1.00px;height:18.30px;background:#c9c9c9;"></div><div class="r" style="left:-30.00px;top:622.00px;width:689.30px;height:1.00px;background:#c9c9c9;"></div><div class="r" style="left:-30.00px;top:639.80px;width:689.30px;height:1.00px;background:#c9c9c9;"></div><div class="r" style="left:-30.00px;top:640.30px;width:33.60px;height:16.00px;background:#ffffff;"></div><div class="r" style="left:3.60px;top:640.30px;width:58.80px;height:16.00px;background:#ffffff;"></div><div class="r" style="left:62.40px;top:640.30px;width:59.00px;height:16.00px;background:#ffffff;"></div><div class="r" style="left:121.40px;top:640.30px;width:59.20px;height:16.00px;background:#ffffff;"></div><div class="r" style="left:180.60px;top:640.30px;width:58.80px;height:16.00px;background:#ffffff;"></div><div class="r" style="left:239.40px;top:640.30px;width:59.60px;height:16.00px;background:#ffffff;"></div><div class="r" style="left:299.00px;top:640.30px;width:59.00px;height:16.00px;background:#ffffff;"></div><div class="r" style="left:358.00px;top:640.30px;width:59.40px;height:16.00px;background:#ffffff;"></div><div class="r" style="left:417.40px;top:640.30px;width:59.10px;height:16.00px;background:#ffffff;"></div><div class="r" style="left:476.50px;top:640.30px;width:58.80px;height:16.00px;background:#ffffff;"></div><div class="r" style="left:535.30px;top:640.30px;width:59.10px;height:16.00px;background:#ffffff;"></div><div class="r" style="left:594.40px;top:640.30px;width:64.90px;height:16.00px;background:#ffffff;"></div><div class="t" style="top:641.30px;height:14px;line-height:14px;font-size:10.8px;color:#222222;right:1078.90px;">0</div><div class="t" style="top:641.30px;height:14px;line-height:14px;font-size:10.8px;color:#222222;right:1020.10px;">-645.80</div><div class="t" style="top:641.30px;height:14px;line-height:14px;font-size:10.8px;color:#222222;right:961.10px;">641.00</div><div class="t" style="top:641.30px;height:14px;line-height:14px;font-size:10.8px;color:#222222;right:901.90px;">4.80</div><div class="t" style="top:641.30px;height:14px;line-height:14px;font-size:10.8px;color:#ee1c24;right:843.10px;">-4.80</div><div class="t" style="top:641.30px;height:14px;line-height:14px;font-size:10.8px;color:#ee1c24;right:783.50px;">-0.74%</div><div class="t" style="top:641.30px;height:14px;line-height:14px;font-size:10.8px;color:#222222;right:724.50px;">2.78</div><div class="t" style="top:641.30px;height:14px;line-height:14px;font-size:10.8px;color:#222222;right:665.10px;">8.00</div><div class="t" style="top:641.30px;height:14px;line-height:14px;font-size:10.8px;color:#7a1010;right:606.00px;">-14.44</div><div class="t" style="top:641.30px;height:14px;line-height:14px;font-size:10.8px;color:#222222;right:547.20px;">54.06</div><div class="t" style="top:641.30px;height:14px;line-height:14px;font-size:10.8px;color:#222222;right:488.10px;">-5.2</div><div class="r" style="left:-30.00px;top:656.30px;width:33.60px;height:15.70px;background:#ffffff;"></div><div class="r" style="left:3.60px;top:656.30px;width:58.80px;height:15.70px;background:#ffffff;"></div><div class="r" style="left:62.40px;top:656.30px;width:59.00px;height:15.70px;background:#ffffff;"></div><div class="r" style="left:121.40px;top:656.30px;width:59.20px;height:15.70px;background:#ffffff;"></div><div class="r" style="left:180.60px;top:656.30px;width:58.80px;height:15.70px;background:#ffffff;"></div><div class="r" style="left:239.40px;top:656.30px;width:59.60px;height:15.70px;background:#ffffff;"></div><div class="r" style="left:299.00px;top:656.30px;width:59.00px;height:15.70px;background:#ffffff;"></div><div class="r" style="left:358.00px;top:656.30px;width:59.40px;height:15.70px;background:#ffffff;"></div><div class="r" style="left:417.40px;top:656.30px;width:59.10px;height:15.70px;background:#ffffff;"></div><div class="r" style="left:476.50px;top:656.30px;width:58.80px;height:15.70px;background:#ffffff;"></div><div class="r" style="left:535.30px;top:656.30px;width:59.10px;height:15.70px;background:#ffffff;"></div><div class="r" style="left:594.40px;top:656.30px;width:64.90px;height:15.70px;background:#ffffff;"></div><div class="t" style="top:657.15px;height:14px;line-height:14px;font-size:10.8px;color:#222222;right:724.50px;">0.00</div><div class="t" style="top:657.15px;height:14px;line-height:14px;font-size:10.8px;color:#222222;right:665.10px;">0.00</div><div class="t" style="top:657.15px;height:14px;line-height:14px;font-size:10.8px;color:#222222;right:606.00px;">0.00</div><div class="t" style="top:657.15px;height:14px;line-height:14px;font-size:10.8px;color:#222222;right:547.20px;">0.00</div><div class="t" style="top:657.15px;height:14px;line-height:14px;font-size:10.8px;color:#222222;right:488.10px;">0</div><div class="r" style="left:3.10px;top:640.30px;width:1.00px;height:31.70px;background:#dcdcdc;"></div><div class="r" style="left:61.90px;top:640.30px;width:1.00px;height:31.70px;background:#dcdcdc;"></div><div class="r" style="left:120.90px;top:640.30px;width:1.00px;height:31.70px;background:#dcdcdc;"></div><div class="r" style="left:180.10px;top:640.30px;width:1.00px;height:31.70px;background:#dcdcdc;"></div><div class="r" style="left:238.90px;top:640.30px;width:1.00px;height:31.70px;background:#dcdcdc;"></div><div class="r" style="left:298.50px;top:640.30px;width:1.00px;height:31.70px;background:#dcdcdc;"></div><div class="r" style="left:357.50px;top:640.30px;width:1.00px;height:31.70px;background:#dcdcdc;"></div><div class="r" style="left:416.90px;top:640.30px;width:1.00px;height:31.70px;background:#dcdcdc;"></div><div class="r" style="left:476.00px;top:640.30px;width:1.00px;height:31.70px;background:#dcdcdc;"></div><div class="r" style="left:534.80px;top:640.30px;width:1.00px;height:31.70px;background:#dcdcdc;"></div><div class="r" style="left:593.90px;top:640.30px;width:1.00px;height:31.70px;background:#dcdcdc;"></div><div class="r" style="left:-30.00px;top:655.80px;width:689.30px;height:1.00px;background:#dcdcdc;"></div><div class="r" style="left:417.40px;top:640.30px;width:59.10px;height:16.00px;background:#ff0000;"></div><div class="t" style="top:641.50px;height:14px;line-height:14px;font-size:10.8px;color:#8a1a1a;right:606.00px;">-14.44</div><div class="r" style="left:-30.00px;top:671.50px;width:689.30px;height:1.00px;background:#c8c8c8;"></div><div class="r" style="left:658.80px;top:622.00px;width:1.00px;height:50.50px;background:#c8c8c8;"></div><svg style="left:621px;top:643.5px" width="11" height="10" viewBox="0 0 11 10"><rect x="0.5" y="0.5" width="9" height="9" fill="#fff" stroke="#8a8a8a" stroke-width="0.8"/><path d="M2 5l2.2 2.3L8.3 2" stroke="#333" stroke-width="1.3" fill="none"/></svg><svg style="left:621px;top:659.3px" width="11" height="10" viewBox="0 0 11 10"><rect x="0.5" y="0.5" width="9" height="9" fill="#fff" stroke="#8a8a8a" stroke-width="0.8"/><path d="M2 5l2.2 2.3L8.3 2" stroke="#333" stroke-width="1.3" fill="none"/></svg><div class="r" style="left:670.30px;top:150.30px;width:409.70px;height:41.70px;background:#e8e8e8;"></div><div class="r" style="left:670.00px;top:150.30px;width:1.00px;height:521.70px;background:#bdbdbd;"></div><div class="r" style="left:735.00px;top:151.30px;width:67.00px;height:19.70px;background:#e4e4e4;box-shadow:inset 0 0 0 1px #c6c6c6;"></div><div class="r" style="left:802.20px;top:151.30px;width:105.80px;height:19.70px;background:#e4e4e4;box-shadow:inset 0 0 0 1px #c6c6c6;"></div><div class="r" style="left:908.00px;top:151.30px;width:54.30px;height:19.70px;background:#e4e4e4;box-shadow:inset 0 0 0 1px #c6c6c6;"></div><div class="r" style="left:962.30px;top:151.30px;width:137.70px;height:19.70px;background:#e4e4e4;box-shadow:inset 0 0 0 1px #c6c6c6;"></div><div class="t" style="top:154.20px;height:14px;line-height:14px;font-size:10.8px;color:#3b3b3b;left:728.00px;width:80px;text-align:center;">Price Chart</div><div class="t" style="top:154.20px;height:14px;line-height:14px;font-size:10.8px;color:#3b3b3b;left:794.70px;width:120px;text-align:center;">Movement Analysis</div><div class="t" style="top:154.20px;height:14px;line-height:14px;font-size:10.8px;color:#3b3b3b;left:904.70px;width:60px;text-align:center;">Volatility</div><div class="t" style="top:154.20px;height:14px;line-height:14px;font-size:10.8px;color:#3b3b3b;left:971.00px;">Statistics &amp; Fundamentals</div><div class="r" style="left:670.30px;top:150.30px;width:65.20px;height:1.00px;background:#c8c8c8;"></div><div class="r" style="left:734.80px;top:150.30px;width:1.00px;height:20.70px;background:#c6c6c6;"></div><div class="r" style="left:735.00px;top:170.30px;width:345.00px;height:1.00px;background:#c6c6c6;"></div><div class="t" style="top:153.30px;height:14px;line-height:14px;font-size:10.8px;color:#3b3b3b;left:662.70px;width:80px;text-align:center;">Risk Chart</div><div class="t" style="top:174.70px;height:14px;line-height:14px;font-size:10.8px;color:#3b3b3b;left:675.80px;">Vol Adjust</div><div class="r" style="left:724.50px;top:173.30px;width:45.50px;height:16.40px;background:#ffffff;box-shadow:inset 0 0 0 1px #bdbdbd;"></div><div class="r" style="left:755.50px;top:174.30px;width:13.50px;height:14.40px;background:#ececec;"></div><div class="r" style="left:755.50px;top:174.30px;width:1.00px;height:14.40px;background:#cfcfcf;"></div><div class="t" style="top:175.00px;height:14px;line-height:14px;font-size:10.8px;color:#222;right:328.00px;">0</div><svg style="left:759px;top:175px" width="7" height="12" viewBox="0 0 7 12"><path d="M1.2 3.8L3.5 1.5l2.3 2.3M1.2 8.2l2.3 2.3 2.3-2.3" stroke="#555" stroke-width="1" fill="none"/></svg><div class="t" style="top:174.70px;height:14px;line-height:14px;font-size:10.8px;color:#3b3b3b;right:51.00px;">Projection</div><div class="r" style="left:1033.50px;top:173.30px;width:56.50px;height:16.40px;background:#ffffff;box-shadow:inset 0 0 0 1px #bdbdbd;"></div><div class="t" style="top:175.00px;height:14px;line-height:14px;font-size:10.8px;color:#222;left:1036.50px;">19/09/2023</div><div class="r" style="left:671.00px;top:192.00px;width:409.00px;height:459.30px;background:#ffffff;"></div><svg style="left:0;top:0" width="1080" height="675" viewBox="0 0 1080 675"><rect x="873.3" y="207.6" width="121.70" height="263.4" fill="#92cbdb"/><rect x="903.6" y="207.6" width="61.30" height="263.4" fill="#4f80bd"/><line x1="715.3" x2="1080" y1="207.60" y2="207.60" stroke="#e2e2e2" stroke-width="1.1" opacity="0.75"/><line x1="715.3" x2="1080" y1="226.41" y2="226.41" stroke="#e2e2e2" stroke-width="1.1" opacity="0.75"/><line x1="715.3" x2="1080" y1="245.23" y2="245.23" stroke="#e2e2e2" stroke-width="1.1" opacity="0.75"/><line x1="715.3" x2="1080" y1="264.04" y2="264.04" stroke="#e2e2e2" stroke-width="1.1" opacity="0.75"/><line x1="715.3" x2="1080" y1="282.86" y2="282.86" stroke="#e2e2e2" stroke-width="1.1" opacity="0.75"/><line x1="715.3" x2="1080" y1="301.67" y2="301.67" stroke="#e2e2e2" stroke-width="1.1" opacity="0.75"/><line x1="715.3" x2="1080" y1="320.49" y2="320.49" stroke="#e2e2e2" stroke-width="1.1" opacity="0.75"/><line x1="715.3" x2="1080" y1="339.30" y2="339.30" stroke="#e2e2e2" stroke-width="1.1" opacity="0.75"/><line x1="715.3" x2="1080" y1="358.11" y2="358.11" stroke="#e2e2e2" stroke-width="1.1" opacity="0.75"/><line x1="715.3" x2="1080" y1="376.93" y2="376.93" stroke="#e2e2e2" stroke-width="1.1" opacity="0.75"/><line x1="715.3" x2="1080" y1="395.74" y2="395.74" stroke="#e2e2e2" stroke-width="1.1" opacity="0.75"/><line x1="715.3" x2="1080" y1="414.56" y2="414.56" stroke="#e2e2e2" stroke-width="1.1" opacity="0.75"/><line x1="715.3" x2="1080" y1="433.37" y2="433.37" stroke="#e2e2e2" stroke-width="1.1" opacity="0.75"/><line x1="715.3" x2="1080" y1="452.19" y2="452.19" stroke="#e2e2e2" stroke-width="1.1" opacity="0.75"/><line x1="715.3" x2="1080" y1="471.00" y2="471.00" stroke="#e2e2e2" stroke-width="1.1" opacity="0.75"/><line x1="726.40" x2="726.40" y1="204.6" y2="474.0" stroke="#e2e2e2" stroke-width="1.1" opacity="0.75"/><line x1="806.60" x2="806.60" y1="204.6" y2="474.0" stroke="#e2e2e2" stroke-width="1.1" opacity="0.75"/><line x1="886.80" x2="886.80" y1="204.6" y2="474.0" stroke="#e2e2e2" stroke-width="1.1" opacity="0.75"/><line x1="967.00" x2="967.00" y1="204.6" y2="474.0" stroke="#e2e2e2" stroke-width="1.1" opacity="0.75"/><line x1="1047.20" x2="1047.20" y1="204.6" y2="474.0" stroke="#e2e2e2" stroke-width="1.1" opacity="0.75"/><line x1="719" x2="719" y1="207.6" y2="471.0" stroke="#d8d8d8" stroke-width="1"/><text transform="translate(882.1,224.1) rotate(-90)" text-anchor="middle" font-family="Liberation Sans" font-size="8.9" fill="#4a8fc4">174.21</text><text transform="translate(912.5,224.1) rotate(-90)" text-anchor="middle" font-family="Liberation Sans" font-size="8.9" fill="#8ab0dc">176.09</text><text transform="translate(963.1,224.1) rotate(-90)" text-anchor="middle" font-family="Liberation Sans" font-size="8.9" fill="#8ab0dc">179.85</text><text transform="translate(992.3,224.1) rotate(-90)" text-anchor="middle" font-family="Liberation Sans" font-size="8.9" fill="#4a8fc4">181.73</text><line x1="719" x2="1080" y1="339.4" y2="339.4" stroke="#333" stroke-width="1"/><defs><clipPath id="pc"><rect x="719" y="207.6" width="361" height="263.4"/></clipPath><clipPath id="above"><rect x="719" y="207.6" width="361" height="113.2"/></clipPath><clipPath id="below"><rect x="719" y="320.8" width="361" height="150.2"/></clipPath></defs><path d="M719.0 215.6 L723.5 220.9 L728.0 226.0 L732.5 231.0 L737.0 235.9 L741.6 240.7 L746.1 245.4 L750.6 249.9 L755.1 254.4 L759.6 258.7 L764.1 262.9 L768.6 267.0 L773.1 271.0 L777.7 274.9 L782.2 278.7 L786.7 282.3 L791.2 285.8 L795.7 289.3 L800.2 292.6 L804.7 295.8 L809.2 298.9 L813.8 301.8 L818.3 304.7 L822.8 307.4 L827.3 310.1 L831.8 312.6 L836.3 315.0 L840.8 317.3 L845.4 319.5 L849.9 321.5 L854.4 323.5 L858.9 325.3 L863.4 327.1 L867.9 328.7 L872.4 330.2 L876.9 331.6 L881.5 332.8 L886.0 334.0 L890.5 335.1 L895.0 336.0 L899.5 336.8 L904.0 337.5 L908.5 338.1 L913.0 338.6 L917.5 339.0 L922.1 339.2 L926.6 339.4 L931.1 339.4 L935.6 339.3 L940.1 339.1 L944.6 338.8 L949.1 338.4 L953.6 337.8 L958.2 337.2 L962.7 336.4 L967.2 335.6 L971.7 334.6 L976.2 333.5 L980.7 332.2 L985.2 330.9 L989.8 329.5 L994.3 327.9 L998.8 326.3 L1003.3 324.5 L1007.8 322.6 L1012.3 320.6 L1016.8 318.4 L1021.3 316.2 L1025.8 313.9 L1030.4 311.4 L1034.9 308.8 L1039.4 306.1 L1043.9 303.3 L1048.4 300.4 L1052.9 297.4 L1057.4 294.3 L1062.0 291.0 L1066.5 287.6 L1071.0 284.2 L1075.5 280.6 L1080.0 276.8" fill="none" stroke="#50e850" stroke-width="1.1" clip-path="url(#above)"/><path d="M719.0 215.6 L723.5 220.9 L728.0 226.0 L732.5 231.0 L737.0 235.9 L741.6 240.7 L746.1 245.4 L750.6 249.9 L755.1 254.4 L759.6 258.7 L764.1 262.9 L768.6 267.0 L773.1 271.0 L777.7 274.9 L782.2 278.7 L786.7 282.3 L791.2 285.8 L795.7 289.3 L800.2 292.6 L804.7 295.8 L809.2 298.9 L813.8 301.8 L818.3 304.7 L822.8 307.4 L827.3 310.1 L831.8 312.6 L836.3 315.0 L840.8 317.3 L845.4 319.5 L849.9 321.5 L854.4 323.5 L858.9 325.3 L863.4 327.1 L867.9 328.7 L872.4 330.2 L876.9 331.6 L881.5 332.8 L886.0 334.0 L890.5 335.1 L895.0 336.0 L899.5 336.8 L904.0 337.5 L908.5 338.1 L913.0 338.6 L917.5 339.0 L922.1 339.2 L926.6 339.4 L931.1 339.4 L935.6 339.3 L940.1 339.1 L944.6 338.8 L949.1 338.4 L953.6 337.8 L958.2 337.2 L962.7 336.4 L967.2 335.6 L971.7 334.6 L976.2 333.5 L980.7 332.2 L985.2 330.9 L989.8 329.5 L994.3 327.9 L998.8 326.3 L1003.3 324.5 L1007.8 322.6 L1012.3 320.6 L1016.8 318.4 L1021.3 316.2 L1025.8 313.9 L1030.4 311.4 L1034.9 308.8 L1039.4 306.1 L1043.9 303.3 L1048.4 300.4 L1052.9 297.4 L1057.4 294.3 L1062.0 291.0 L1066.5 287.6 L1071.0 284.2 L1075.5 280.6 L1080.0 276.8" fill="none" stroke="#8fb0f4" stroke-width="1.1" clip-path="url(#below)"/><path d="M719.0 227.3 L723.5 233.8 L728.0 240.1 L732.5 246.2 L737.0 252.3 L741.6 258.2 L746.1 263.9 L750.6 269.5 L755.1 275.0 L759.6 280.3 L764.1 285.5 L768.6 290.6 L773.1 295.5 L777.7 300.2 L782.2 304.9 L786.7 309.4 L791.2 313.7 L795.7 317.9 L800.2 322.0 L804.7 325.9 L809.2 329.7 L813.8 333.4 L818.3 336.9 L822.8 340.3 L827.3 343.5 L831.8 346.6 L836.3 349.6 L840.8 352.4 L845.4 355.1 L849.9 357.6 L854.4 360.0 L858.9 362.3 L863.4 364.4 L867.9 366.4 L872.4 368.3 L876.9 370.0 L881.5 371.5 L886.0 373.0 L890.5 374.3 L895.0 375.4 L899.5 376.4 L904.0 377.3 L908.5 378.0 L913.0 378.6 L917.5 379.1 L922.1 379.4 L926.6 379.6 L931.1 379.6 L935.6 379.5 L940.1 379.3 L944.6 378.9 L949.1 378.3 L953.6 377.7 L958.2 376.9 L962.7 375.9 L967.2 374.9 L971.7 373.7 L976.2 372.3 L980.7 370.8 L985.2 369.2 L989.8 367.4 L994.3 365.5 L998.8 363.4 L1003.3 361.2 L1007.8 358.9 L1012.3 356.4 L1016.8 353.8 L1021.3 351.1 L1025.8 348.2 L1030.4 345.2 L1034.9 342.0 L1039.4 338.7 L1043.9 335.2 L1048.4 331.6 L1052.9 327.9 L1057.4 324.1 L1062.0 320.1 L1066.5 315.9 L1071.0 311.6 L1075.5 307.2 L1080.0 302.7" fill="none" stroke="#f26a6a" stroke-width="1.1" clip-path="url(#pc)"/><path d="M719.0 242.0 L723.5 249.8 L728.0 257.4 L732.5 264.9 L737.0 272.2 L741.6 279.3 L746.1 286.3 L750.6 293.1 L755.1 299.7 L759.6 306.2 L764.1 312.5 L768.6 318.6 L773.1 324.5 L777.7 330.3 L782.2 336.0 L786.7 341.4 L791.2 346.7 L795.7 351.8 L800.2 356.8 L804.7 361.6 L809.2 366.2 L813.8 370.7 L818.3 375.0 L822.8 379.1 L827.3 383.1 L831.8 386.8 L836.3 390.5 L840.8 393.9 L845.4 397.2 L849.9 400.3 L854.4 403.3 L858.9 406.1 L863.4 408.7 L867.9 411.2 L872.4 413.4 L876.9 415.6 L881.5 417.5 L886.0 419.3 L890.5 420.9 L895.0 422.4 L899.5 423.7 L904.0 424.8 L908.5 425.7 L913.0 426.5 L917.5 427.1 L922.1 427.6 L926.6 427.9 L931.1 428.0 L935.6 427.9 L940.1 427.7 L944.6 427.3 L949.1 426.8 L953.6 426.1 L958.2 425.2 L962.7 424.1 L967.2 422.9 L971.7 421.5 L976.2 420.0 L980.7 418.3 L985.2 416.4 L989.8 414.3 L994.3 412.1 L998.8 409.7 L1003.3 407.2 L1007.8 404.4 L1012.3 401.6 L1016.8 398.5 L1021.3 395.3 L1025.8 391.9 L1030.4 388.3 L1034.9 384.6 L1039.4 380.7 L1043.9 376.7 L1048.4 372.4 L1052.9 368.0 L1057.4 363.5 L1062.0 358.8 L1066.5 353.9 L1071.0 348.8 L1075.5 343.6 L1080.0 338.2" fill="none" stroke="#a0a0a0" stroke-width="1.1" clip-path="url(#pc)"/><path d="M718.6 255 L806.6 460 L1047.2 460 L1081 381" fill="none" stroke="#4646c8" stroke-width="1.8" clip-path="url(#pc)"/><line x1="755" x2="755" y1="207.6" y2="471.0" stroke="#b474d0" stroke-width="1.3" stroke-dasharray="3 3"/><rect x="924" y="336.5" width="25" height="6" fill="#b89a9a" opacity="0.85" transform="rotate(-5 936 339.5)"/><circle cx="932" cy="340.2" r="2.6" fill="#ff0000" stroke="#600000" stroke-width="0.8"/></svg><div class="t" style="top:201.20px;height:14px;line-height:14px;font-size:8.7px;color:#333;right:367.40px;letter-spacing:0;">108%</div><div class="t" style="top:220.01px;height:14px;line-height:14px;font-size:8.7px;color:#333;right:367.40px;letter-spacing:0;">93%</div><div class="t" style="top:238.83px;height:14px;line-height:14px;font-size:8.7px;color:#333;right:367.40px;letter-spacing:0;">77%</div><div class="t" style="top:257.64px;height:14px;line-height:14px;font-size:8.7px;color:#333;right:367.40px;letter-spacing:0;">62%</div><div class="t" style="top:276.46px;height:14px;line-height:14px;font-size:8.7px;color:#333;right:367.40px;letter-spacing:0;">46%</div><div class="t" style="top:295.27px;height:14px;line-height:14px;font-size:8.7px;color:#333;right:367.40px;letter-spacing:0;">31%</div><div class="t" style="top:314.09px;height:14px;line-height:14px;font-size:8.7px;color:#333;right:367.40px;letter-spacing:0;">15%</div><div class="r" style="left:676.00px;top:334.00px;width:38.60px;height:10.60px;background:#d00000;"></div><div class="t" style="top:332.80px;height:14px;line-height:14px;font-size:8.7px;color:#ffffff;right:367.40px;letter-spacing:0;">-1%</div><div class="t" style="top:351.71px;height:14px;line-height:14px;font-size:8.7px;color:#333;right:367.40px;letter-spacing:0;">-15%</div><div class="t" style="top:370.53px;height:14px;line-height:14px;font-size:8.7px;color:#333;right:367.40px;letter-spacing:0;">-31%</div><div class="t" style="top:389.34px;height:14px;line-height:14px;font-size:8.7px;color:#333;right:367.40px;letter-spacing:0;">-46%</div><div class="t" style="top:408.16px;height:14px;line-height:14px;font-size:8.7px;color:#333;right:367.40px;letter-spacing:0;">-62%</div><div class="t" style="top:426.97px;height:14px;line-height:14px;font-size:8.7px;color:#333;right:367.40px;letter-spacing:0;">-77%</div><div class="t" style="top:445.79px;height:14px;line-height:14px;font-size:8.7px;color:#333;right:367.40px;letter-spacing:0;">-93%</div><div class="t" style="top:464.60px;height:14px;line-height:14px;font-size:8.7px;color:#333;right:367.40px;letter-spacing:0;">-108%</div><div class="t" style="top:193.00px;height:14px;line-height:14px;font-size:8.7px;color:#333;left:701.40px;width:50px;text-align:center;letter-spacing:0;">-7.3%</div><div class="t" style="top:193.00px;height:14px;line-height:14px;font-size:8.7px;color:#333;left:781.60px;width:50px;text-align:center;letter-spacing:0;">-4.5%</div><div class="t" style="top:193.00px;height:14px;line-height:14px;font-size:8.7px;color:#333;left:861.80px;width:50px;text-align:center;letter-spacing:0;">-1.7%</div><div class="t" style="top:193.00px;height:14px;line-height:14px;font-size:8.7px;color:#333;left:942.00px;width:50px;text-align:center;letter-spacing:0;">1.1%</div><div class="t" style="top:193.00px;height:14px;line-height:14px;font-size:8.7px;color:#333;left:1022.20px;width:50px;text-align:center;letter-spacing:0;">4.0%</div><div class="r" style="left:918.20px;top:192.20px;width:27.80px;height:11.20px;background:#f2f5fb;box-shadow:inset 0 0 0 1px #5a6a84;"></div><div class="t" style="top:191.30px;height:14px;line-height:14px;font-size:8.7px;color:#333;left:912.20px;width:40px;text-align:center;letter-spacing:0;">-0.1%</div><div class="t" style="top:473.60px;height:14px;line-height:14px;font-size:8.7px;color:#333;left:706.40px;width:40px;text-align:center;letter-spacing:0;">165</div><div class="t" style="top:473.60px;height:14px;line-height:14px;font-size:8.7px;color:#333;left:786.60px;width:40px;text-align:center;letter-spacing:0;">170</div><div class="t" style="top:473.60px;height:14px;line-height:14px;font-size:8.7px;color:#333;left:866.80px;width:40px;text-align:center;letter-spacing:0;">175</div><div class="t" style="top:473.60px;height:14px;line-height:14px;font-size:8.7px;color:#333;left:947.00px;width:40px;text-align:center;letter-spacing:0;">180</div><div class="t" style="top:473.60px;height:14px;line-height:14px;font-size:8.7px;color:#333;left:1027.20px;width:40px;text-align:center;letter-spacing:0;">185</div><div class="r" style="left:722.60px;top:212.40px;width:133.00px;height:69.80px;background:rgba(232,238,250,0.75);box-shadow:inset 0 0 0 1px #8a9ab4;border-radius:4px;"></div><div class="r" style="left:728.80px;top:219.40px;width:2.80px;height:10.50px;background:#e03838;"></div><div class="t" style="top:217.40px;height:14px;line-height:14px;font-size:8.7px;color:#333;left:732.50px;letter-spacing:0;"><span style="color:#555">-4.80 Realized PnL</span></div><div class="r" style="left:728.80px;top:231.05px;width:2.80px;height:10.50px;background:#7ea2ea;"></div><div class="t" style="top:229.05px;height:14px;line-height:14px;font-size:8.7px;color:#333;left:732.50px;letter-spacing:0;"><span style="color:#333">+2 </span><span style="color:#5a5af2">27oct. 170 Put &#916;</span></div><div class="t" style="top:229.05px;height:14px;line-height:14px;font-size:8.7px;color:#5a5af2;right:233.00px;letter-spacing:0;">-23.31</div><div class="r" style="left:728.80px;top:242.70px;width:2.80px;height:10.50px;background:#7ea2ea;"></div><div class="t" style="top:240.70px;height:14px;line-height:14px;font-size:8.7px;color:#333;left:732.50px;letter-spacing:0;"><span style="color:#333">+2 </span><span style="color:#5a5af2">27oct. 185 Call &#916;</span></div><div class="t" style="top:240.70px;height:14px;line-height:14px;font-size:8.7px;color:#5a5af2;right:233.00px;letter-spacing:0;">30.20</div><div class="r" style="left:728.80px;top:254.35px;width:2.80px;height:10.50px;background:#7ea2ea;"></div><div class="t" style="top:252.35px;height:14px;line-height:14px;font-size:8.7px;color:#333;left:732.50px;letter-spacing:0;"><span style="color:#333">-1 </span><span style="color:#f05656">27oct. 190 Call &#916;</span></div><div class="t" style="top:252.35px;height:14px;line-height:14px;font-size:8.7px;color:#f05656;right:233.00px;letter-spacing:0;">16.76</div><div class="r" style="left:728.80px;top:266.00px;width:2.80px;height:10.50px;background:#7ea2ea;"></div><div class="t" style="top:264.00px;height:14px;line-height:14px;font-size:8.7px;color:#333;left:732.50px;letter-spacing:0;"><span style="color:#333">-1 </span><span style="color:#f05656">27oct. 155 Put &#916;</span></div><div class="t" style="top:264.00px;height:14px;line-height:14px;font-size:8.7px;color:#f05656;right:233.00px;letter-spacing:0;">-5.79</div><div class="r" style="left:1040.00px;top:212.40px;width:60.00px;height:36.20px;background:rgba(234,239,250,0.82);box-shadow:inset 0 0 0 1px #9aaac4;border-radius:4px;"></div><div class="t" style="top:214.80px;height:14px;line-height:14px;font-size:9.2px;color:#3a3a3a;left:1049.00px;letter-spacing:0;">Comments</div><div class="t" style="top:232.30px;height:14px;line-height:14px;font-size:8.7px;color:#555;left:1049.00px;letter-spacing:0;">Trade Open</div><div class="r" style="left:722.40px;top:408.60px;width:97.20px;height:58.60px;background:rgba(230,237,250,0.6);box-shadow:inset 0 0 0 1px #8a9ab4;border-radius:4px;"></div><div class="t" style="top:414.20px;height:14px;line-height:14px;font-size:8.7px;color:#7878e4;left:729.40px;letter-spacing:0;">27/10/2023 (0)</div><div class="t" style="top:425.70px;height:14px;line-height:14px;font-size:8.7px;color:#a4a4a4;left:729.40px;letter-spacing:0;">15/10/2023 (12) T+26</div><div class="t" style="top:437.20px;height:14px;line-height:14px;font-size:8.7px;color:#f27070;left:729.40px;letter-spacing:0;">02/10/2023 (25) T+13</div><div class="t" style="top:448.70px;height:14px;line-height:14px;font-size:8.7px;color:#96b4f0;left:729.40px;letter-spacing:0;">19/09/2023 (38) T+0</div><svg style="left:744px;top:436px" width="14" height="42"><text transform="translate(10,21) rotate(-90)" text-anchor="middle" font-family="Liberation Sans" font-size="8.7" fill="#c890d8" opacity="0.8">166.xx</text></svg><div class="t" style="top:453.50px;height:14px;line-height:14px;font-size:8.7px;color:#8a30a8;left:716.00px;width:40px;text-align:center;letter-spacing:0;">16.7%</div><div class="t" style="top:453.00px;height:14px;line-height:14px;font-size:8.7px;color:#8a30a8;left:905.50px;width:40px;text-align:center;letter-spacing:0;">61.2%</div><div class="r" style="left:674.00px;top:489.30px;width:426.00px;height:158.70px;background:#e8eef7;box-shadow:inset 0 0 0 1px #9aa8b8;border-radius:4px;"></div><div class="t" style="top:507.00px;height:14px;line-height:14px;font-size:8.7px;color:#707070;left:671.40px;width:50px;text-align:center;letter-spacing:0;">PnL</div><div class="t" style="top:543.40px;height:14px;line-height:14px;font-size:8.7px;color:#707070;left:671.40px;width:50px;text-align:center;letter-spacing:0;">Delta</div><div class="t" style="top:570.70px;height:14px;line-height:14px;font-size:8.7px;color:#707070;left:671.40px;width:50px;text-align:center;letter-spacing:0;">Gamma</div><div class="t" style="top:598.20px;height:14px;line-height:14px;font-size:8.7px;color:#707070;left:671.40px;width:50px;text-align:center;letter-spacing:0;">Theta</div><div class="t" style="top:625.60px;height:14px;line-height:14px;font-size:8.7px;color:#707070;left:671.40px;width:50px;text-align:center;letter-spacing:0;">Vega</div><svg style="left:0;top:0" width="1080" height="675" viewBox="0 0 1080 675"><g stroke-width="0.9"><rect x="719.1" y="504.0" width="47.4" height="9.2" fill="#5878f6" stroke="#6a6f80"/><rect x="766.5" y="509.6" width="80.3" height="3.6" fill="#5878f6" stroke="#6a6f80"/><rect x="846.8" y="512.2" width="80.2" height="1.0" fill="#5878f6" stroke="#6a6f80"/><rect x="927.0" y="512.2" width="80.3" height="1.0" fill="#5878f6" stroke="#6a6f80"/><rect x="1007.3" y="509.7" width="79.7" height="3.5" fill="#5878f6" stroke="#6a6f80"/><rect x="719.1" y="549.8" width="47.4" height="8.5" fill="#f07676" stroke="#6a6f80"/><rect x="766.5" y="549.8" width="80.3" height="5.2" fill="#f07676" stroke="#6a6f80"/><rect x="846.8" y="549.8" width="80.2" height="1.8" fill="#f07676" stroke="#6a6f80"/><rect x="927.0" y="547.2" width="80.3" height="2.6" fill="#5878f6" stroke="#6a6f80"/><rect x="1007.3" y="544.6" width="79.7" height="5.2" fill="#5878f6" stroke="#6a6f80"/><rect x="719.1" y="570.8" width="47.4" height="6.0" fill="#5878f6" stroke="#6a6f80"/><rect x="766.5" y="568.6" width="80.3" height="8.2" fill="#5878f6" stroke="#6a6f80"/><rect x="846.8" y="568.0" width="80.2" height="8.8" fill="#5878f6" stroke="#6a6f80"/><rect x="927.0" y="568.7" width="80.3" height="8.1" fill="#5878f6" stroke="#6a6f80"/><rect x="1007.3" y="571.2" width="79.7" height="5.6" fill="#5878f6" stroke="#6a6f80"/><rect x="719.1" y="604.5" width="47.4" height="3.2" fill="#f07676" stroke="#6a6f80"/><rect x="766.5" y="604.5" width="80.3" height="6.5" fill="#f07676" stroke="#6a6f80"/><rect x="846.8" y="604.5" width="80.2" height="8.2" fill="#f07676" stroke="#6a6f80"/><rect x="927.0" y="604.5" width="80.3" height="8.8" fill="#f07676" stroke="#6a6f80"/><rect x="1007.3" y="604.5" width="79.7" height="6.7" fill="#f07676" stroke="#6a6f80"/><rect x="719.1" y="626.6" width="47.4" height="5.0" fill="#5878f6" stroke="#6a6f80"/><rect x="766.5" y="624.0" width="80.3" height="7.6" fill="#5878f6" stroke="#6a6f80"/><rect x="846.8" y="622.8" width="80.2" height="8.8" fill="#5878f6" stroke="#6a6f80"/><rect x="927.0" y="623.4" width="80.3" height="8.2" fill="#5878f6" stroke="#6a6f80"/><rect x="1007.3" y="625.6" width="79.7" height="6.0" fill="#5878f6" stroke="#6a6f80"/></g></svg><div class="t" style="top:511.60px;height:14px;line-height:14px;font-size:8.7px;color:#7b7cf2;left:706.40px;width:40px;text-align:center;letter-spacing:0;">619</div><div class="t" style="top:519.40px;height:14px;line-height:14px;font-size:8.7px;color:#7b7cf2;left:706.40px;width:40px;text-align:center;letter-spacing:0;">96%</div><div class="t" style="top:511.60px;height:14px;line-height:14px;font-size:8.7px;color:#7b7cf2;left:786.60px;width:40px;text-align:center;letter-spacing:0;">225</div><div class="t" style="top:519.40px;height:14px;line-height:14px;font-size:8.7px;color:#7b7cf2;left:786.60px;width:40px;text-align:center;letter-spacing:0;">35%</div><div class="t" style="top:511.60px;height:14px;line-height:14px;font-size:8.7px;color:#7b7cf2;left:866.80px;width:40px;text-align:center;letter-spacing:0;">20</div><div class="t" style="top:519.40px;height:14px;line-height:14px;font-size:8.7px;color:#7b7cf2;left:866.80px;width:40px;text-align:center;letter-spacing:0;">3%</div><div class="t" style="top:511.60px;height:14px;line-height:14px;font-size:8.7px;color:#7b7cf2;left:947.00px;width:40px;text-align:center;letter-spacing:0;">19</div><div class="t" style="top:519.40px;height:14px;line-height:14px;font-size:8.7px;color:#7b7cf2;left:947.00px;width:40px;text-align:center;letter-spacing:0;">3%</div><div class="t" style="top:511.60px;height:14px;line-height:14px;font-size:8.7px;color:#7b7cf2;left:1027.20px;width:40px;text-align:center;letter-spacing:0;">205</div><div class="t" style="top:519.40px;height:14px;line-height:14px;font-size:8.7px;color:#7b7cf2;left:1027.20px;width:40px;text-align:center;letter-spacing:0;">32%</div><div class="t" style="top:538.70px;height:14px;line-height:14px;font-size:8.7px;color:#f07a7a;left:701.40px;width:50px;text-align:center;letter-spacing:0;">-95.14</div><div class="t" style="top:538.70px;height:14px;line-height:14px;font-size:8.7px;color:#f07a7a;left:781.60px;width:50px;text-align:center;letter-spacing:0;">-60.87</div><div class="t" style="top:538.70px;height:14px;line-height:14px;font-size:8.7px;color:#f07a7a;left:861.80px;width:50px;text-align:center;letter-spacing:0;">-20.50</div><div class="t" style="top:548.30px;height:14px;line-height:14px;font-size:8.7px;color:#7b7cf2;left:942.00px;width:50px;text-align:center;letter-spacing:0;">19.52</div><div class="t" style="top:548.30px;height:14px;line-height:14px;font-size:8.7px;color:#7b7cf2;left:1022.20px;width:50px;text-align:center;letter-spacing:0;">53.20</div><div class="t" style="top:575.80px;height:14px;line-height:14px;font-size:8.7px;color:#7b7cf2;left:701.40px;width:50px;text-align:center;letter-spacing:0;">5.88</div><div class="t" style="top:575.80px;height:14px;line-height:14px;font-size:8.7px;color:#7b7cf2;left:781.60px;width:50px;text-align:center;letter-spacing:0;">7.66</div><div class="t" style="top:575.80px;height:14px;line-height:14px;font-size:8.7px;color:#7b7cf2;left:861.80px;width:50px;text-align:center;letter-spacing:0;">8.26</div><div class="t" style="top:575.80px;height:14px;line-height:14px;font-size:8.7px;color:#7b7cf2;left:942.00px;width:50px;text-align:center;letter-spacing:0;">7.54</div><div class="t" style="top:575.80px;height:14px;line-height:14px;font-size:8.7px;color:#7b7cf2;left:1022.20px;width:50px;text-align:center;letter-spacing:0;">5.81</div><div class="t" style="top:593.50px;height:14px;line-height:14px;font-size:8.7px;color:#f07a7a;left:701.40px;width:50px;text-align:center;letter-spacing:0;">-5.82</div><div class="t" style="top:593.50px;height:14px;line-height:14px;font-size:8.7px;color:#f07a7a;left:781.60px;width:50px;text-align:center;letter-spacing:0;">-10.76</div><div class="t" style="top:593.50px;height:14px;line-height:14px;font-size:8.7px;color:#f07a7a;left:861.80px;width:50px;text-align:center;letter-spacing:0;">-13.83</div><div class="t" style="top:593.50px;height:14px;line-height:14px;font-size:8.7px;color:#f07a7a;left:942.00px;width:50px;text-align:center;letter-spacing:0;">-14.35</div><div class="t" style="top:593.50px;height:14px;line-height:14px;font-size:8.7px;color:#f07a7a;left:1022.20px;width:50px;text-align:center;letter-spacing:0;">-12.56</div><div class="t" style="top:630.50px;height:14px;line-height:14px;font-size:8.7px;color:#7b7cf2;left:701.40px;width:50px;text-align:center;letter-spacing:0;">32.53</div><div class="t" style="top:630.50px;height:14px;line-height:14px;font-size:8.7px;color:#7b7cf2;left:781.60px;width:50px;text-align:center;letter-spacing:0;">46.66</div><div class="t" style="top:630.50px;height:14px;line-height:14px;font-size:8.7px;color:#7b7cf2;left:861.80px;width:50px;text-align:center;letter-spacing:0;">53.93</div><div class="t" style="top:630.50px;height:14px;line-height:14px;font-size:8.7px;color:#7b7cf2;left:942.00px;width:50px;text-align:center;letter-spacing:0;">52.21</div><div class="t" style="top:630.50px;height:14px;line-height:14px;font-size:8.7px;color:#7b7cf2;left:1022.20px;width:50px;text-align:center;letter-spacing:0;">42.59</div><div class="r" style="left:910.60px;top:475.60px;width:42.20px;height:172.40px;background:rgba(234,240,248,0.96);box-shadow:inset 0 0 0 1px #7a8898;border-radius:5px;"></div><div class="r" style="left:911.60px;top:547.00px;width:40.20px;height:5.50px;background:rgba(200,205,215,0.35);"></div><div class="r" style="left:911.60px;top:570.00px;width:40.20px;height:7.00px;background:rgba(180,200,245,0.45);"></div><div class="r" style="left:911.60px;top:604.50px;width:40.20px;height:7.50px;background:rgba(240,190,190,0.35);"></div><div class="r" style="left:911.60px;top:623.00px;width:40.20px;height:8.60px;background:rgba(180,200,245,0.45);"></div><div class="t" style="top:475.30px;height:14px;line-height:14px;font-size:8.7px;color:#333;left:907.00px;width:50px;text-align:center;letter-spacing:0;">177.85</div><div class="t" style="top:502.80px;height:14px;line-height:14px;font-size:8.7px;color:#f02020;left:912.00px;width:40px;text-align:center;letter-spacing:0;">-5</div><div class="t" style="top:515.40px;height:14px;line-height:14px;font-size:8.7px;color:#f02020;left:912.00px;width:40px;text-align:center;letter-spacing:0;">-0.7%</div><div class="t" style="top:543.60px;height:14px;line-height:14px;font-size:8.7px;color:#3535e0;left:912.00px;width:40px;text-align:center;letter-spacing:0;">2.78</div><div class="t" style="top:570.80px;height:14px;line-height:14px;font-size:8.7px;color:#3535e0;left:912.00px;width:40px;text-align:center;letter-spacing:0;">8.00</div><div class="t" style="top:598.30px;height:14px;line-height:14px;font-size:8.7px;color:#e82020;left:907.00px;width:50px;text-align:center;letter-spacing:0;">-14.44</div><div class="t" style="top:625.80px;height:14px;line-height:14px;font-size:8.7px;color:#3535e0;left:907.00px;width:50px;text-align:center;letter-spacing:0;">54.06</div><div class="r" style="left:671.00px;top:651.30px;width:409.00px;height:20.50px;background:#333333;"></div><div class="t" style="top:654.60px;height:14px;line-height:14px;font-size:10.8px;color:#d8d8d8;right:13.00px;">200%</div><div class="r" style="left:1075.00px;top:661.00px;width:5.00px;height:1.20px;background:#d8d8d8;"></div></body></html>
